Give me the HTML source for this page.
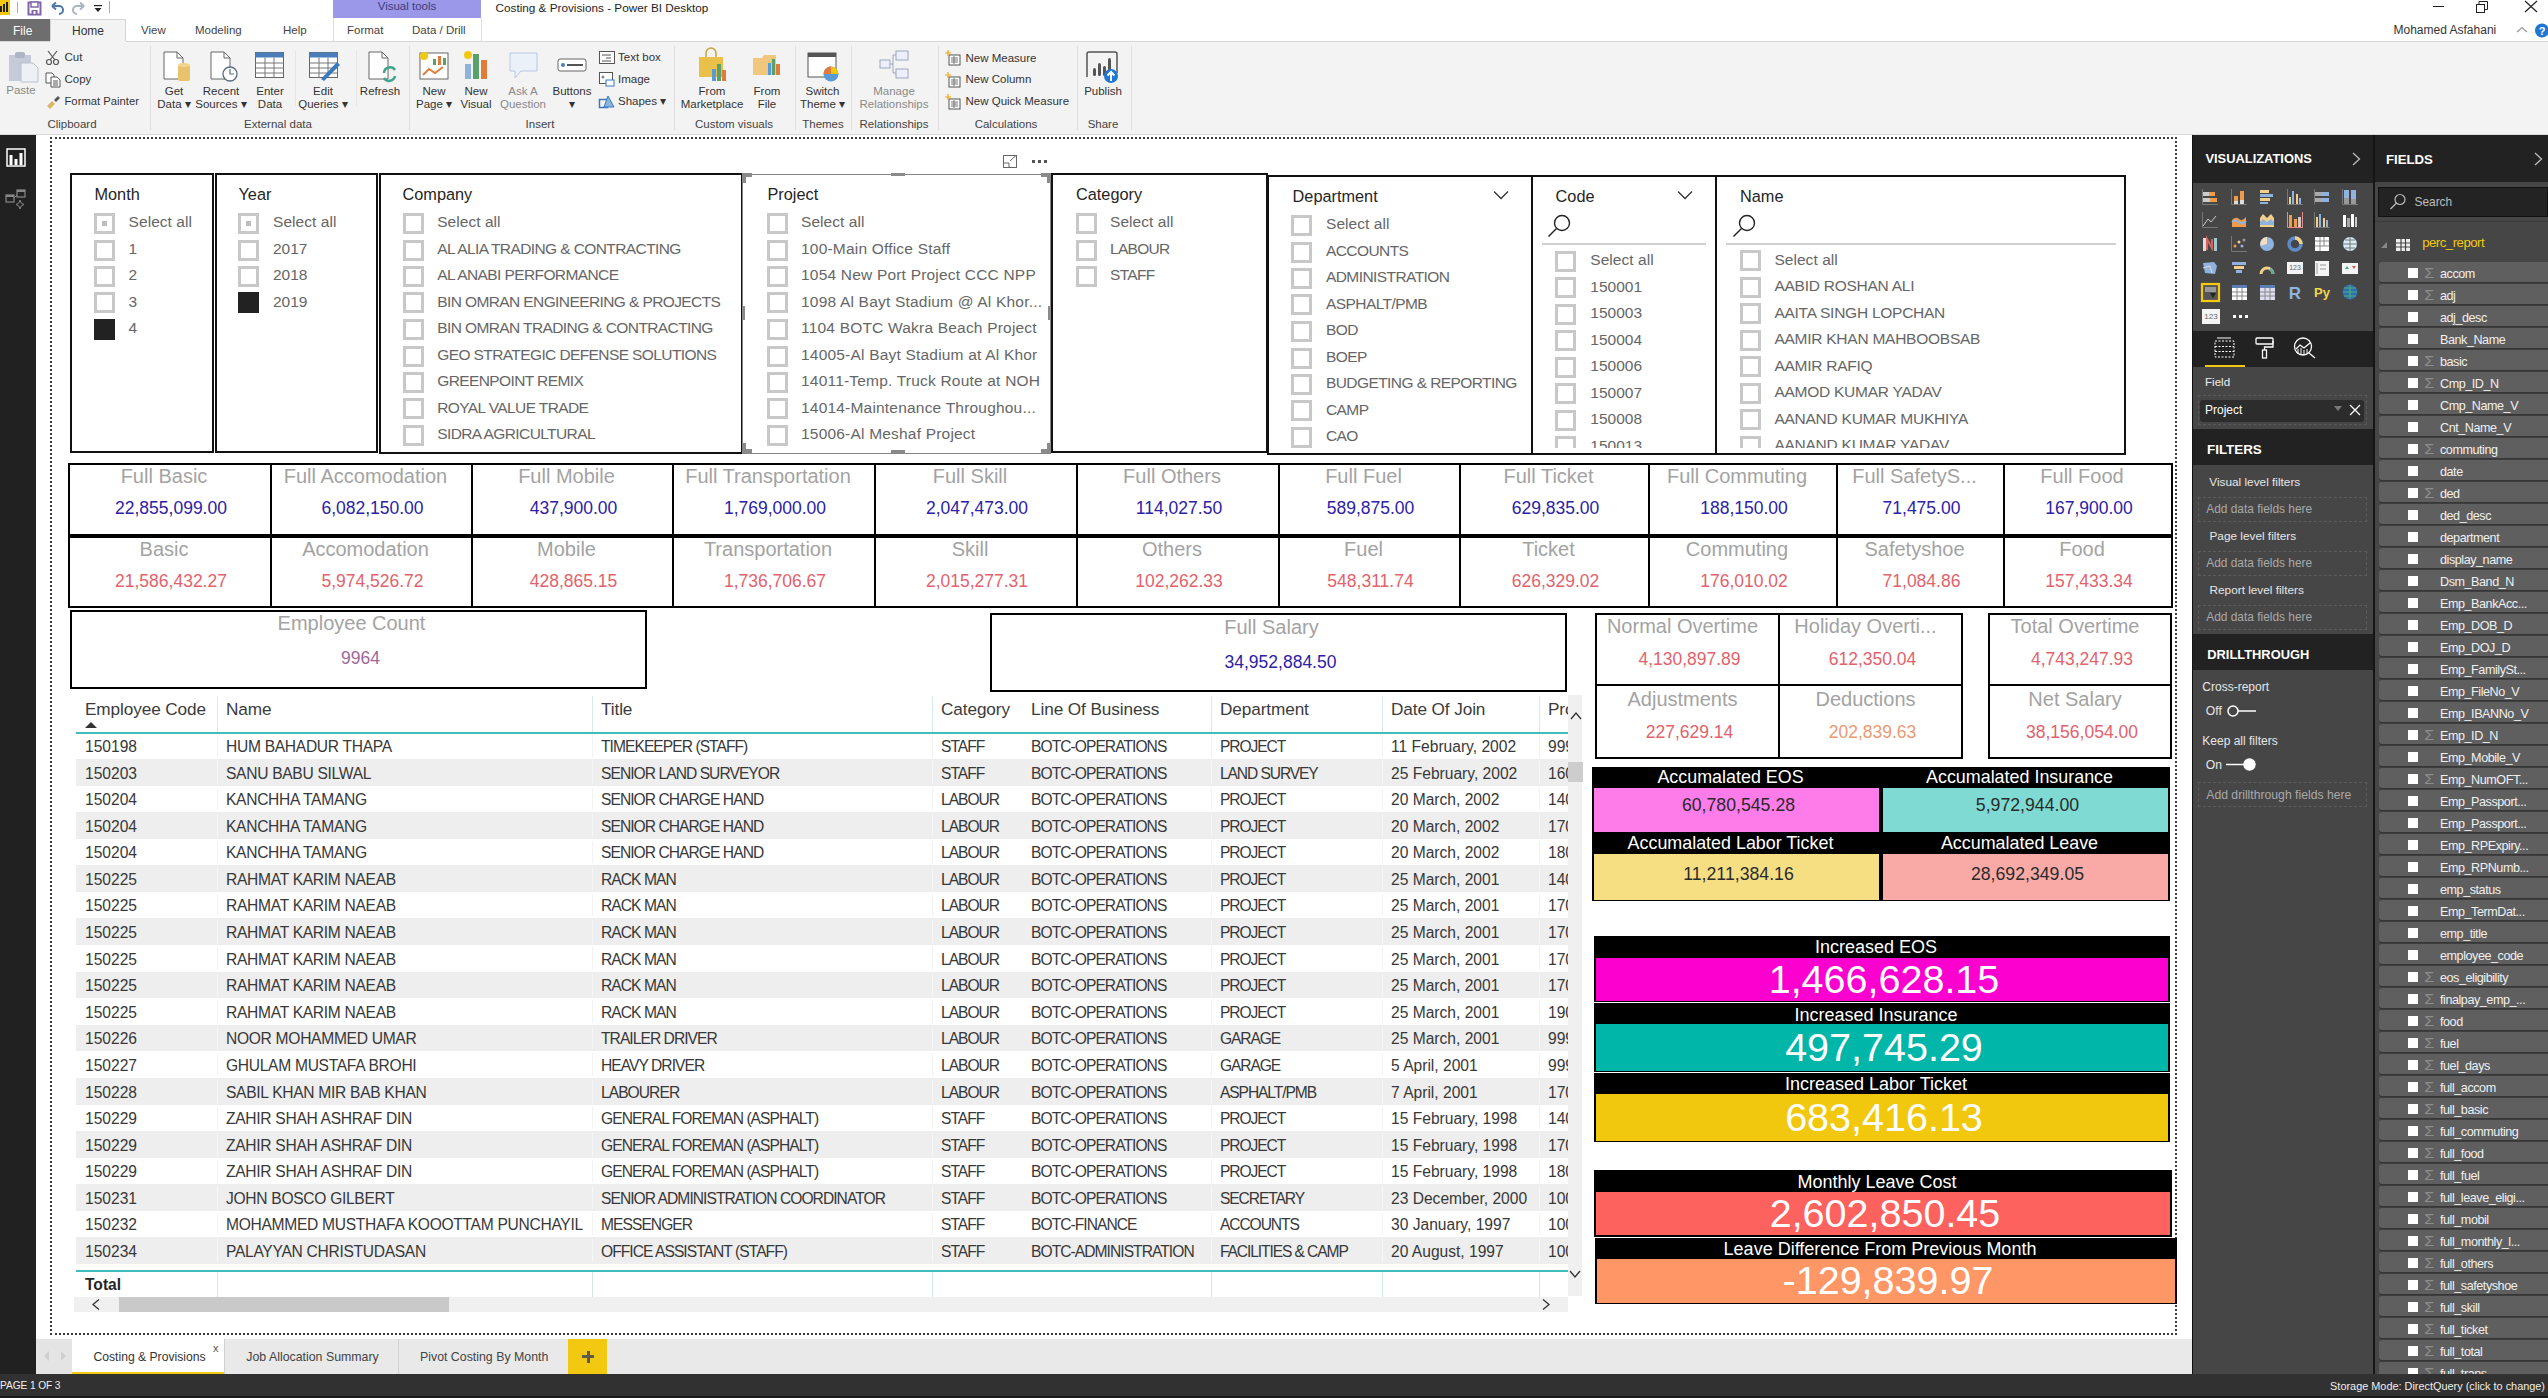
<!DOCTYPE html><html><head><meta charset="utf-8"><style>
html,body{margin:0;padding:0;width:2548px;height:1398px;overflow:hidden;background:#fff}
body{position:relative;font-family:"Liberation Sans",sans-serif}
div{position:absolute;white-space:nowrap;line-height:1}
svg{overflow:visible}
</style></head><body>
<div style="left:0px;top:0px;width:2548px;height:19px;background:#fff"></div>
<div style="left:0px;top:19px;width:2548px;height:23px;background:#fff"></div>
<div style="left:0px;top:42px;width:2548px;height:93px;background:#f3f3f3"></div>
<div style="left:0px;top:134px;width:2548px;height:1px;background:#d9d9d9"></div>
<div style="left:36px;top:135px;width:2156px;height:1204px;background:#fff"></div>
<div style="left:0px;top:135px;width:36px;height:1239px;background:#212121"></div>
<div style="left:36px;top:1339px;width:2156px;height:35px;background:#e9e9e9"></div>
<div style="left:0px;top:1374px;width:2548px;height:24px;background:#313131"></div>
<div style="left:0px;top:1396px;width:2548px;height:2px;background:#1a1a1a"></div>
<div style="left:0px;top:0px;width:10px;height:15px;background:#f2c811"></div>
<div style="left:0px;top:6px;width:2px;height:6px;background:#222"></div>
<div style="left:3px;top:4px;width:2px;height:8px;background:#222"></div>
<div style="left:6px;top:2px;width:2px;height:10px;background:#222"></div>
<div style="left:17px;top:2px;width:1px;height:11px;background:#aaa"></div>
<svg style="position:absolute;left:27px;top:1px;" width="16" height="14" viewBox="0 0 16 14"><rect x="1.5" y="1.5" width="12" height="12" fill="none" stroke="#8066a8" stroke-width="2"/><rect x="4" y="1" width="7" height="5" fill="#fff" stroke="#8066a8" stroke-width="1.5"/><rect x="4.5" y="9" width="6" height="4" fill="#8066a8"/><rect x="6.5" y="10" width="2" height="3" fill="#fff"/></svg>
<svg style="position:absolute;left:49px;top:1px;" width="16" height="14" viewBox="0 0 16 14"><path d="M3 5 L7 1.5 M3 5 L7 8.5 M3 5 H10 A4 4 0 0 1 10 13" fill="none" stroke="#4f77a8" stroke-width="2"/></svg>
<svg style="position:absolute;left:71px;top:1px;" width="16" height="14" viewBox="0 0 16 14"><path d="M13 5 L9 1.5 M13 5 L9 8.5 M13 5 H6 A4 4 0 0 0 6 13" fill="none" stroke="#a9b4c2" stroke-width="2"/></svg>
<svg style="position:absolute;left:93px;top:4px;" width="10" height="9" viewBox="0 0 10 9"><rect x="1" y="1" width="8" height="1.2" fill="#222"/><path d="M1.5 4 H8.5 L5 8 Z" fill="#222"/></svg>
<div style="left:109px;top:1px;width:1px;height:12px;background:#aaa"></div>
<div style="left:333px;top:0px;width:148px;height:18px;background:#9b98ea"></div>
<div style="left:-193px;width:1200px;text-align:center;top:1.27px;font-size:11.5px;color:#3c3c7c;">Visual tools</div>
<div style="left:495.5px;top:1.85px;font-size:11.75px;color:#1e1e1e;">Costing &amp; Provisions - Power BI Desktop</div>
<div style="left:2433px;top:6px;width:11px;height:1px;background:#222"></div>
<svg style="position:absolute;left:2476px;top:1px;" width="12" height="12" viewBox="0 0 12 12"><rect x="0.5" y="3.5" width="8" height="8" fill="none" stroke="#222"/><path d="M3 3.5 V0.5 H11.5 V8.5 H8.5" fill="none" stroke="#222"/></svg>
<svg style="position:absolute;left:2524px;top:0px;" width="14" height="13" viewBox="0 0 14 13"><path d="M1 1 L13 12 M13 1 L1 12" stroke="#222" stroke-width="1.2"/></svg>
<div style="left:0px;top:19px;width:50px;height:23px;background:#6e6e6e"></div>
<div style="left:13px;top:24.84px;font-size:12px;color:#fff;">File</div>
<div style="left:50px;top:19px;width:76px;height:23px;background:#f3f3f3;border:1px solid #d4d4d4;border-bottom:none;box-sizing:border-box"></div>
<div style="left:-512px;width:1200px;text-align:center;top:24.84px;font-size:12px;color:#333;">Home</div>
<div style="left:141px;top:25.27px;font-size:11.5px;color:#444;">View</div>
<div style="left:195px;top:25.27px;font-size:11.5px;color:#444;">Modeling</div>
<div style="left:283px;top:25.27px;font-size:11.5px;color:#444;">Help</div>
<div style="left:333px;top:18px;width:1px;height:24px;background:#e0e0e0"></div>
<div style="left:481px;top:18px;width:1px;height:24px;background:#e0e0e0"></div>
<div style="left:347px;top:25.27px;font-size:11.5px;color:#444;">Format</div>
<div style="left:412px;top:25.27px;font-size:11.5px;color:#444;">Data / Drill</div>
<div style="left:0px;top:41px;width:2548px;height:1px;background:#d8d8d8"></div>
<div style="left:50px;top:41px;width:76px;height:1px;background:#f3f3f3"></div>
<div style="left:2393.5px;top:24.34px;font-size:12px;color:#333;">Mohamed Asfahani</div>
<svg style="position:absolute;left:2516px;top:26px;" width="12" height="8" viewBox="0 0 12 8"><path d="M1 6 L6 1.5 L11 6" fill="none" stroke="#999" stroke-width="1.2"/></svg>
<svg style="position:absolute;left:2534px;top:23px;" width="14" height="15" viewBox="0 0 14 15"><circle cx="8" cy="7.5" r="7" fill="#1e78d2"/><text x="8" y="12" font-size="11" font-weight="bold" fill="#fff" text-anchor="middle" font-family="Liberation Sans">?</text></svg>
<div style="left:150px;top:46px;width:1px;height:84px;background:#dedede"></div>
<div style="left:409px;top:46px;width:1px;height:84px;background:#dedede"></div>
<div style="left:674px;top:46px;width:1px;height:84px;background:#dedede"></div>
<div style="left:795px;top:46px;width:1px;height:84px;background:#dedede"></div>
<div style="left:851px;top:46px;width:1px;height:84px;background:#dedede"></div>
<div style="left:938px;top:46px;width:1px;height:84px;background:#dedede"></div>
<div style="left:1077px;top:46px;width:1px;height:84px;background:#dedede"></div>
<div style="left:1131px;top:46px;width:1px;height:84px;background:#dedede"></div>
<div style="left:295px;top:50px;width:1px;height:56px;background:#e6e6e6"></div>
<div style="left:356px;top:50px;width:1px;height:56px;background:#e6e6e6"></div>
<div style="left:-528px;width:1200px;text-align:center;top:119.27px;font-size:11.5px;color:#444;">Clipboard</div>
<div style="left:-322px;width:1200px;text-align:center;top:119.27px;font-size:11.5px;color:#444;">External data</div>
<div style="left:-60px;width:1200px;text-align:center;top:119.27px;font-size:11.5px;color:#444;">Insert</div>
<div style="left:134px;width:1200px;text-align:center;top:119.27px;font-size:11.5px;color:#444;">Custom visuals</div>
<div style="left:223px;width:1200px;text-align:center;top:119.27px;font-size:11.5px;color:#444;">Themes</div>
<div style="left:294px;width:1200px;text-align:center;top:119.27px;font-size:11.5px;color:#444;">Relationships</div>
<div style="left:406px;width:1200px;text-align:center;top:119.27px;font-size:11.5px;color:#444;">Calculations</div>
<div style="left:503px;width:1200px;text-align:center;top:119.27px;font-size:11.5px;color:#444;">Share</div>
<svg style="position:absolute;left:8px;top:51px;" width="32" height="32" viewBox="0 0 32 32"><rect x="1" y="4" width="22" height="26" fill="#c5cbd8"/><rect x="7" y="1" width="10" height="6" rx="2" fill="#aeb6c6"/><path d="M13 12 H25 L30 17 V31 H13 Z" fill="#eef0f5" stroke="#b9c0cf"/></svg>
<div style="left:-579px;width:1200px;text-align:center;top:85.27px;font-size:11.5px;color:#8a8a8a;">Paste</div>
<svg style="position:absolute;left:45px;top:50px;" width="16" height="16" viewBox="0 0 16 16"><circle cx="4" cy="12" r="2.5" fill="none" stroke="#555" stroke-width="1.2"/><circle cx="11" cy="12" r="2.5" fill="none" stroke="#555" stroke-width="1.2"/><path d="M5 10 L12 1 M10 10 L3 1" stroke="#555" stroke-width="1.2"/></svg>
<div style="left:64.5px;top:52.27px;font-size:11.5px;color:#333;">Cut</div>
<svg style="position:absolute;left:45px;top:72px;" width="16" height="16" viewBox="0 0 16 16"><path d="M1 1 H7 L9 3 V11 H1 Z" fill="#fff" stroke="#555"/><path d="M6 5 H12 L15 8 V15 H6 Z" fill="#fff" stroke="#555"/><path d="M8 9 H13 M8 11 H13 M8 13 H13" stroke="#555"/></svg>
<div style="left:64.5px;top:74.27px;font-size:11.5px;color:#333;">Copy</div>
<svg style="position:absolute;left:45px;top:94px;" width="16" height="16" viewBox="0 0 16 16"><path d="M2 12 L7 7 L10 10 L5 15 Z" fill="#d9b76a"/><path d="M9 6 L13 2 L15 4 L11 8 Z" fill="#555"/></svg>
<div style="left:64.5px;top:96.48px;font-size:11.25px;color:#333;">Format Painter</div>
<svg style="position:absolute;left:163px;top:51px;" width="30" height="32" viewBox="0 0 30 32"><path d="M1 1 H14 L20 7 V28 H1 Z" fill="#fff" stroke="#666"/><path d="M14 1 V7 H20" fill="none" stroke="#666"/><rect x="15" y="14" width="12" height="16" rx="2" fill="#e8c26d"/><ellipse cx="21" cy="14" rx="6" ry="2" fill="#f2d48a"/></svg>
<div style="left:-426px;width:1200px;text-align:center;top:86.27px;font-size:11.5px;color:#333;">Get</div>
<div style="left:-426px;width:1200px;text-align:center;top:99.27px;font-size:11.5px;color:#333;">Data &#9662;</div>
<svg style="position:absolute;left:210px;top:51px;" width="30" height="32" viewBox="0 0 30 32"><path d="M1 1 H14 L20 7 V28 H1 Z" fill="#fff" stroke="#666"/><path d="M14 1 V7 H20" fill="none" stroke="#666"/><circle cx="20" cy="23" r="7" fill="#fff" stroke="#5a6b80" stroke-width="1.3"/><path d="M20 18 V23 H24" fill="none" stroke="#5a6b80" stroke-width="1.2"/></svg>
<div style="left:-379px;width:1200px;text-align:center;top:86.27px;font-size:11.5px;color:#333;">Recent</div>
<div style="left:-379px;width:1200px;text-align:center;top:99.27px;font-size:11.5px;color:#333;">Sources &#9662;</div>
<svg style="position:absolute;left:255px;top:52px;" width="30" height="27" viewBox="0 0 30 27"><rect x="0.5" y="0.5" width="28" height="25" fill="#fff" stroke="#666"/><rect x="0.5" y="0.5" width="28" height="5" fill="#4a7ebb"/><path d="M0.5 11 H28.5 M0.5 16 H28.5 M0.5 21 H28.5 M10 5.5 V25.5 M19 5.5 V25.5" stroke="#777" stroke-width="1"/></svg>
<div style="left:-330px;width:1200px;text-align:center;top:86.27px;font-size:11.5px;color:#333;">Enter</div>
<div style="left:-330px;width:1200px;text-align:center;top:99.27px;font-size:11.5px;color:#333;">Data</div>
<svg style="position:absolute;left:309px;top:52px;" width="32" height="30" viewBox="0 0 32 30"><rect x="0.5" y="0.5" width="28" height="25" fill="#fff" stroke="#666"/><rect x="0.5" y="0.5" width="28" height="5" fill="#4a7ebb"/><path d="M0.5 11 H28.5 M0.5 16 H28.5 M0.5 21 H28.5 M10 5.5 V25.5 M19 5.5 V25.5" stroke="#777"/><path d="M12 27 L28 10 L31 13 L15 29 Z" fill="#3b78c0"/></svg>
<div style="left:-277px;width:1200px;text-align:center;top:86.27px;font-size:11.5px;color:#333;">Edit</div>
<div style="left:-277px;width:1200px;text-align:center;top:99.27px;font-size:11.5px;color:#333;">Queries &#9662;</div>
<svg style="position:absolute;left:368px;top:51px;" width="30" height="32" viewBox="0 0 30 32"><path d="M1 1 H14 L20 7 V28 H1 Z" fill="#fff" stroke="#666"/><path d="M14 1 V7 H20" fill="none" stroke="#666"/><path d="M16 22 A6 6 0 0 1 27 19 M27 25 A6 6 0 0 1 16 27" fill="none" stroke="#3fa58d" stroke-width="2.5"/></svg>
<div style="left:-220px;width:1200px;text-align:center;top:86.27px;font-size:11.5px;color:#333;">Refresh</div>
<svg style="position:absolute;left:419px;top:50px;" width="32" height="31" viewBox="0 0 32 31"><rect x="1" y="3" width="28" height="26" fill="#fff" stroke="#666"/><rect x="14" y="9" width="3" height="6" fill="#5aa06a"/><rect x="19" y="6" width="3" height="9" fill="#e07b39"/><rect x="24" y="8" width="3" height="7" fill="#5aa06a"/><path d="M4 25 L10 19 L16 23 L24 17" fill="none" stroke="#e07b39" stroke-width="2"/><circle cx="5" cy="6" r="4" fill="#f2c811"/></svg>
<div style="left:-166px;width:1200px;text-align:center;top:86.27px;font-size:11.5px;color:#333;">New</div>
<div style="left:-166px;width:1200px;text-align:center;top:99.27px;font-size:11.5px;color:#333;">Page &#9662;</div>
<svg style="position:absolute;left:463px;top:50px;" width="28" height="31" viewBox="0 0 28 31"><rect x="2" y="14" width="6" height="15" fill="#8fb4dc"/><rect x="10" y="4" width="6" height="25" fill="#5aa06a"/><rect x="18" y="10" width="6" height="19" fill="#e07b39"/><circle cx="5" cy="5" r="4" fill="#f2c811"/></svg>
<div style="left:-124px;width:1200px;text-align:center;top:86.27px;font-size:11.5px;color:#333;">New</div>
<div style="left:-124px;width:1200px;text-align:center;top:99.27px;font-size:11.5px;color:#333;">Visual</div>
<svg style="position:absolute;left:509px;top:52px;" width="30" height="28" viewBox="0 0 30 28"><path d="M1 1 H28 V19 H12 L6 26 V19 H1 Z" fill="#eaf1f9" stroke="#b7c9de"/></svg>
<div style="left:-77px;width:1200px;text-align:center;top:86.27px;font-size:11.5px;color:#8a8a8a;">Ask A</div>
<div style="left:-77px;width:1200px;text-align:center;top:99.27px;font-size:11.5px;color:#8a8a8a;">Question</div>
<svg style="position:absolute;left:557px;top:58px;" width="32" height="16" viewBox="0 0 32 16"><rect x="1" y="1" width="28" height="12" rx="2" fill="#fff" stroke="#666"/><circle cx="6" cy="7" r="2" fill="#4a7ebb"/><rect x="10" y="6" width="16" height="2" fill="#555"/></svg>
<div style="left:-28px;width:1200px;text-align:center;top:86.27px;font-size:11.5px;color:#333;">Buttons</div>
<div style="left:-28px;width:1200px;text-align:center;top:99.27px;font-size:11.5px;color:#333;">&#9662;</div>
<svg style="position:absolute;left:599px;top:51px;" width="16" height="14" viewBox="0 0 16 14"><rect x="0.5" y="0.5" width="15" height="12" fill="#fff" stroke="#555"/><path d="M3 4 H12 M7 7 H12 M3 10 H12" stroke="#555"/></svg>
<div style="left:618px;top:52.27px;font-size:11.5px;color:#333;">Text box</div>
<svg style="position:absolute;left:599px;top:72px;" width="16" height="16" viewBox="0 0 16 16"><rect x="0.5" y="0.5" width="13" height="11" fill="#fff" stroke="#555"/><circle cx="4" cy="5" r="1.5" fill="#888"/><rect x="7" y="8" width="8" height="6" fill="#fff" stroke="#3b78c0"/></svg>
<div style="left:618px;top:74.27px;font-size:11.5px;color:#333;">Image</div>
<svg style="position:absolute;left:599px;top:95px;" width="16" height="14" viewBox="0 0 16 14"><rect x="0.5" y="4.5" width="8" height="8" fill="none" stroke="#3b78c0" stroke-width="1.5"/><path d="M9 1 L15 12 H5 Z" fill="#8fb4dc" stroke="#3b78c0"/></svg>
<div style="left:618px;top:96.27px;font-size:11.5px;color:#333;">Shapes &#9662;</div>
<svg style="position:absolute;left:697px;top:49px;" width="32" height="34" viewBox="0 0 32 34"><path d="M2 8 H26 V28 H2 Z" fill="#e8c04a"/><path d="M9 8 V4 A5 5 0 0 1 19 4 V8" fill="none" stroke="#c9a232" stroke-width="1.5"/><rect x="15" y="20" width="4" height="12" fill="#5a9bd5"/><rect x="20" y="15" width="4" height="17" fill="#5aa06a"/><rect x="25" y="21" width="4" height="11" fill="#e07b39"/></svg>
<div style="left:112px;width:1200px;text-align:center;top:86.27px;font-size:11.5px;color:#333;">From</div>
<div style="left:112px;width:1200px;text-align:center;top:98.77px;font-size:11.5px;color:#333;">Marketplace</div>
<svg style="position:absolute;left:752px;top:53px;" width="32" height="26" viewBox="0 0 32 26"><path d="M1 5 H10 L12 2 H24 V22 H1 Z" fill="#f0c77d"/><rect x="16" y="10" width="3" height="12" fill="#5a9bd5"/><rect x="20" y="6" width="3" height="16" fill="#5aa06a"/><rect x="24" y="11" width="4" height="11" fill="#e07b39"/></svg>
<div style="left:167px;width:1200px;text-align:center;top:86.27px;font-size:11.5px;color:#333;">From</div>
<div style="left:167px;width:1200px;text-align:center;top:98.77px;font-size:11.5px;color:#333;">File</div>
<svg style="position:absolute;left:807px;top:52px;" width="32" height="30" viewBox="0 0 32 30"><rect x="1" y="1" width="28" height="24" fill="#fff" stroke="#555"/><rect x="1" y="1" width="28" height="4" fill="#555"/><circle cx="24" cy="22" r="7.5" fill="#5a9bd5"/><path d="M24 22 L24 14.5 A7.5 7.5 0 0 0 16.5 22 Z" fill="#e07b39"/><path d="M24 22 L31.5 22 A7.5 7.5 0 0 0 24 14.5 Z" fill="#f2c811"/></svg>
<div style="left:222.5px;width:1200px;text-align:center;top:86.27px;font-size:11.5px;color:#333;">Switch</div>
<div style="left:222.5px;width:1200px;text-align:center;top:98.77px;font-size:11.5px;color:#333;">Theme &#9662;</div>
<svg style="position:absolute;left:879px;top:50px;" width="32" height="30" viewBox="0 0 32 30"><rect x="1" y="10" width="10" height="8" fill="#eef" stroke="#9aa8bb"/><rect x="17" y="1" width="12" height="9" fill="#eef" stroke="#9aa8bb"/><rect x="17" y="19" width="12" height="9" fill="#eef" stroke="#9aa8bb"/><path d="M11 14 H14 V5 H17 M14 14 V23 H17" fill="none" stroke="#9aa8bb"/></svg>
<div style="left:294px;width:1200px;text-align:center;top:86.27px;font-size:11.5px;color:#8a8a8a;">Manage</div>
<div style="left:294px;width:1200px;text-align:center;top:98.77px;font-size:11.5px;color:#8a8a8a;">Relationships</div>
<svg style="position:absolute;left:945px;top:50px;" width="18" height="16" viewBox="0 0 18 16"><rect x="4" y="5" width="11" height="10" fill="#fff" stroke="#555"/><path d="M6 8 H13 M6 10 H13 M6 12 H13 M9 6 V14" stroke="#777"/><path d="M3 0 V6 M0 3 H6" stroke="#f2a811" stroke-width="1.2"/></svg>
<svg style="position:absolute;left:945px;top:72px;" width="18" height="16" viewBox="0 0 18 16"><rect x="4" y="5" width="11" height="10" fill="#fff" stroke="#555"/><path d="M6 8 H13 M6 10 H13 M6 12 H13 M9 6 V14" stroke="#777"/><path d="M3 0 V6 M0 3 H6" stroke="#f2a811" stroke-width="1.2"/></svg>
<svg style="position:absolute;left:945px;top:94px;" width="18" height="16" viewBox="0 0 18 16"><rect x="4" y="5" width="11" height="10" fill="#fff" stroke="#555"/><path d="M6 8 H13 M6 10 H13 M6 12 H13 M9 6 V14" stroke="#777"/><path d="M3 0 V6 M0 3 H6" stroke="#f2a811" stroke-width="1.2"/></svg>
<div style="left:965.5px;top:52.77px;font-size:11.5px;color:#333;">New Measure</div>
<div style="left:965.5px;top:74.47px;font-size:11.5px;color:#333;">New Column</div>
<div style="left:965.5px;top:96.27px;font-size:11.5px;color:#333;">New Quick Measure</div>
<svg style="position:absolute;left:1086px;top:51px;" width="36" height="33" viewBox="0 0 36 33"><path d="M1 26 V3 A2 2 0 0 1 3 1 H29 A2 2 0 0 1 31 3 V22" fill="none" stroke="#555" stroke-width="1.5"/><rect x="7" y="17" width="3" height="8" rx="1.5" fill="#555"/><rect x="12" y="12" width="3" height="13" rx="1.5" fill="#555"/><rect x="17" y="15" width="3" height="10" rx="1.5" fill="#555"/><rect x="22" y="7" width="3" height="13" rx="1.5" fill="#555"/><circle cx="25" cy="25" r="7" fill="#1e78d2"/><path d="M25 30 V21 M21.5 24.5 L25 21 L28.5 24.5" fill="none" stroke="#fff" stroke-width="2"/></svg>
<div style="left:503px;width:1200px;text-align:center;top:86.27px;font-size:11.5px;color:#333;">Publish</div>
<svg style="position:absolute;left:6px;top:148px;" width="20" height="19" viewBox="0 0 20 19"><rect x="1" y="1" width="18" height="17" fill="none" stroke="#fff" stroke-width="1.5"/><rect x="3.5" y="7" width="3" height="10" fill="#fff"/><rect x="8.5" y="11" width="3" height="6" fill="#fff"/><rect x="13.5" y="5" width="3" height="12" fill="#fff"/></svg>
<svg style="position:absolute;left:5px;top:189px;" width="22" height="21" viewBox="0 0 22 21"><rect x="1" y="6" width="8" height="7" fill="none" stroke="#888" stroke-width="1.2"/><rect x="1" y="6" width="8" height="2" fill="#888"/><rect x="12" y="1" width="8" height="7" fill="none" stroke="#888" stroke-width="1.2"/><rect x="12" y="1" width="8" height="2" fill="#888"/><path d="M9 9 L12 6" stroke="#888"/><path d="M15 11 Q15.5 15 19 15.5 Q15.5 16 15 20 Q14.5 16 11 15.5 Q14.5 15 15 11 Z" fill="none" stroke="#888"/></svg>
<div style="left:50px;top:137px;width:2127px;height:1198px;border:2px dotted #3a3a3a;box-sizing:border-box"></div>
<div style="left:70px;top:173px;width:144px;height:280px;border:2px solid #111;box-sizing:border-box;background:#fff"></div>
<div style="left:215px;top:173px;width:163px;height:280px;border:2px solid #111;box-sizing:border-box;background:#fff"></div>
<div style="left:379px;top:173px;width:364px;height:281px;border:2px solid #111;box-sizing:border-box;background:#fff"></div>
<div style="left:1051px;top:173px;width:217px;height:280px;border:2px solid #111;box-sizing:border-box;background:#fff"></div>
<div style="left:1267px;top:175px;width:266px;height:280px;border:2px solid #111;box-sizing:border-box;background:#fff"></div>
<div style="left:1531px;top:175px;width:186px;height:280px;border:2px solid #111;box-sizing:border-box;background:#fff"></div>
<div style="left:1715px;top:175px;width:411px;height:280px;border:2px solid #111;box-sizing:border-box;background:#fff"></div>
<div style="left:742px;top:173.5px;width:309px;height:280px;border:1.5px solid #858585;box-sizing:border-box;background:#fff"></div>
<div style="left:742px;top:173px;width:10px;height:4px;background:#8a8a8a"></div>
<div style="left:742px;top:173px;width:4px;height:10px;background:#8a8a8a"></div>
<div style="left:1041px;top:173px;width:10px;height:4px;background:#8a8a8a"></div>
<div style="left:1047px;top:173px;width:4px;height:10px;background:#8a8a8a"></div>
<div style="left:742px;top:449px;width:10px;height:4px;background:#8a8a8a"></div>
<div style="left:742px;top:443px;width:4px;height:10px;background:#8a8a8a"></div>
<div style="left:1041px;top:449px;width:10px;height:4px;background:#8a8a8a"></div>
<div style="left:1047px;top:443px;width:4px;height:10px;background:#8a8a8a"></div>
<div style="left:891px;top:173px;width:14px;height:3px;background:#8a8a8a"></div>
<div style="left:891px;top:450px;width:14px;height:3px;background:#8a8a8a"></div>
<div style="left:742px;top:306px;width:3px;height:14px;background:#8a8a8a"></div>
<div style="left:1048px;top:306px;width:3px;height:14px;background:#8a8a8a"></div>
<svg style="position:absolute;left:1003px;top:155px;" width="16" height="14" viewBox="0 0 16 14"><rect x="0.5" y="0.5" width="13" height="12" fill="none" stroke="#666"/><path d="M0.5 8 H6 V12.5 M7 6 L13 0.5 M9 0.5 H13.5 V4.5" fill="none" stroke="#666"/></svg>
<div style="left:1032px;top:160px;width:3px;height:3px;background:#555"></div>
<div style="left:1038px;top:160px;width:3px;height:3px;background:#555"></div>
<div style="left:1044px;top:160px;width:3px;height:3px;background:#555"></div>
<div style="left:94.5px;top:186.20px;font-size:16.3px;color:#252525;">Month</div>
<div style="left:93.5px;top:213px;width:21px;height:21px;border:3px solid #c8c8c8;box-sizing:border-box;background:#fff"></div>
<div style="left:101.5px;top:221px;width:5px;height:5px;background:#bdbdbd"></div>
<div style="left:128.6px;top:214.48px;font-size:15.5px;color:#666;letter-spacing:0.05px">Select all</div>
<div style="left:93.5px;top:240px;width:21px;height:21px;border:3px solid #c8c8c8;box-sizing:border-box;background:#fff"></div>
<div style="left:128.6px;top:240.98px;font-size:15.5px;color:#666;letter-spacing:0px">1</div>
<div style="left:93.5px;top:266px;width:21px;height:21px;border:3px solid #c8c8c8;box-sizing:border-box;background:#fff"></div>
<div style="left:128.6px;top:267.48px;font-size:15.5px;color:#666;letter-spacing:0px">2</div>
<div style="left:93.5px;top:292px;width:21px;height:21px;border:3px solid #c8c8c8;box-sizing:border-box;background:#fff"></div>
<div style="left:128.6px;top:293.98px;font-size:15.5px;color:#666;letter-spacing:0px">3</div>
<div style="left:93.5px;top:319px;width:21px;height:21px;background:#222"></div>
<div style="left:128.6px;top:320.48px;font-size:15.5px;color:#666;letter-spacing:0px">4</div>
<div style="left:238.5px;top:186.20px;font-size:16.3px;color:#252525;">Year</div>
<div style="left:238px;top:213px;width:21px;height:21px;border:3px solid #c8c8c8;box-sizing:border-box;background:#fff"></div>
<div style="left:246px;top:221px;width:5px;height:5px;background:#bdbdbd"></div>
<div style="left:273px;top:214.48px;font-size:15.5px;color:#666;letter-spacing:0.05px">Select all</div>
<div style="left:238px;top:240px;width:21px;height:21px;border:3px solid #c8c8c8;box-sizing:border-box;background:#fff"></div>
<div style="left:273px;top:240.98px;font-size:15.5px;color:#666;letter-spacing:0px">2017</div>
<div style="left:238px;top:266px;width:21px;height:21px;border:3px solid #c8c8c8;box-sizing:border-box;background:#fff"></div>
<div style="left:273px;top:267.48px;font-size:15.5px;color:#666;letter-spacing:0px">2018</div>
<div style="left:238px;top:292px;width:21px;height:21px;background:#222"></div>
<div style="left:273px;top:293.98px;font-size:15.5px;color:#666;letter-spacing:0px">2019</div>
<div style="left:402.5px;top:186.20px;font-size:16.3px;color:#252525;">Company</div>
<div style="left:402.5px;top:213px;width:21px;height:21px;border:3px solid #c8c8c8;box-sizing:border-box;background:#fff"></div>
<div style="left:437.2px;top:214.48px;font-size:15.5px;color:#666;letter-spacing:0.05px">Select all</div>
<div style="left:402.5px;top:240px;width:21px;height:21px;border:3px solid #c8c8c8;box-sizing:border-box;background:#fff"></div>
<div style="left:437.2px;top:240.98px;font-size:15.5px;color:#666;letter-spacing:-0.6px">AL ALIA TRADING &amp; CONTRACTING</div>
<div style="left:402.5px;top:266px;width:21px;height:21px;border:3px solid #c8c8c8;box-sizing:border-box;background:#fff"></div>
<div style="left:437.2px;top:267.48px;font-size:15.5px;color:#666;letter-spacing:-0.6px">AL ANABI PERFORMANCE</div>
<div style="left:402.5px;top:292px;width:21px;height:21px;border:3px solid #c8c8c8;box-sizing:border-box;background:#fff"></div>
<div style="left:437.2px;top:293.98px;font-size:15.5px;color:#666;letter-spacing:-0.6px">BIN OMRAN ENGINEERING &amp; PROJECTS</div>
<div style="left:402.5px;top:319px;width:21px;height:21px;border:3px solid #c8c8c8;box-sizing:border-box;background:#fff"></div>
<div style="left:437.2px;top:320.48px;font-size:15.5px;color:#666;letter-spacing:-0.6px">BIN OMRAN TRADING &amp; CONTRACTING</div>
<div style="left:402.5px;top:346px;width:21px;height:21px;border:3px solid #c8c8c8;box-sizing:border-box;background:#fff"></div>
<div style="left:437.2px;top:346.98px;font-size:15.5px;color:#666;letter-spacing:-0.6px">GEO STRATEGIC DEFENSE SOLUTIONS</div>
<div style="left:402.5px;top:372px;width:21px;height:21px;border:3px solid #c8c8c8;box-sizing:border-box;background:#fff"></div>
<div style="left:437.2px;top:373.48px;font-size:15.5px;color:#666;letter-spacing:-0.6px">GREENPOINT REMIX</div>
<div style="left:402.5px;top:398px;width:21px;height:21px;border:3px solid #c8c8c8;box-sizing:border-box;background:#fff"></div>
<div style="left:437.2px;top:399.98px;font-size:15.5px;color:#666;letter-spacing:-0.6px">ROYAL VALUE TRADE</div>
<div style="left:402.5px;top:425px;width:21px;height:21px;border:3px solid #c8c8c8;box-sizing:border-box;background:#fff"></div>
<div style="left:437.2px;top:426.48px;font-size:15.5px;color:#666;letter-spacing:-0.6px">SIDRA AGRICULTURAL</div>
<div style="left:767.5px;top:186.20px;font-size:16.3px;color:#252525;">Project</div>
<div style="left:766.5px;top:213px;width:21px;height:21px;border:3px solid #c8c8c8;box-sizing:border-box;background:#fff"></div>
<div style="left:801px;top:214.48px;font-size:15.5px;color:#666;letter-spacing:0.05px">Select all</div>
<div style="left:766.5px;top:240px;width:21px;height:21px;border:3px solid #c8c8c8;box-sizing:border-box;background:#fff"></div>
<div style="left:801px;top:240.98px;font-size:15.5px;color:#666;letter-spacing:0.2px">100-Main Office Staff</div>
<div style="left:766.5px;top:266px;width:21px;height:21px;border:3px solid #c8c8c8;box-sizing:border-box;background:#fff"></div>
<div style="left:801px;top:267.48px;font-size:15.5px;color:#666;letter-spacing:0.2px">1054 New Port Project CCC NPP</div>
<div style="left:766.5px;top:292px;width:21px;height:21px;border:3px solid #c8c8c8;box-sizing:border-box;background:#fff"></div>
<div style="left:801px;top:293.98px;font-size:15.5px;color:#666;letter-spacing:0.2px">1098 Al Bayt Stadium @ Al Khor...</div>
<div style="left:766.5px;top:319px;width:21px;height:21px;border:3px solid #c8c8c8;box-sizing:border-box;background:#fff"></div>
<div style="left:801px;top:320.48px;font-size:15.5px;color:#666;letter-spacing:0.2px">1104 BOTC Wakra Beach Project</div>
<div style="left:766.5px;top:346px;width:21px;height:21px;border:3px solid #c8c8c8;box-sizing:border-box;background:#fff"></div>
<div style="left:801px;top:346.98px;font-size:15.5px;color:#666;letter-spacing:0.2px">14005-Al Bayt Stadium at Al Khor</div>
<div style="left:766.5px;top:372px;width:21px;height:21px;border:3px solid #c8c8c8;box-sizing:border-box;background:#fff"></div>
<div style="left:801px;top:373.48px;font-size:15.5px;color:#666;letter-spacing:0.2px">14011-Temp. Truck Route at NOH</div>
<div style="left:766.5px;top:398px;width:21px;height:21px;border:3px solid #c8c8c8;box-sizing:border-box;background:#fff"></div>
<div style="left:801px;top:399.98px;font-size:15.5px;color:#666;letter-spacing:0.2px">14014-Maintenance Throughou...</div>
<div style="left:766.5px;top:425px;width:21px;height:21px;border:3px solid #c8c8c8;box-sizing:border-box;background:#fff"></div>
<div style="left:801px;top:426.48px;font-size:15.5px;color:#666;letter-spacing:0.2px">15006-Al Meshaf Project</div>
<div style="left:1076px;top:186.20px;font-size:16.3px;color:#252525;">Category</div>
<div style="left:1075.5px;top:213px;width:21px;height:21px;border:3px solid #c8c8c8;box-sizing:border-box;background:#fff"></div>
<div style="left:1110px;top:214.48px;font-size:15.5px;color:#666;letter-spacing:0.05px">Select all</div>
<div style="left:1075.5px;top:240px;width:21px;height:21px;border:3px solid #c8c8c8;box-sizing:border-box;background:#fff"></div>
<div style="left:1110px;top:240.98px;font-size:15.5px;color:#666;letter-spacing:-0.7px">LABOUR</div>
<div style="left:1075.5px;top:266px;width:21px;height:21px;border:3px solid #c8c8c8;box-sizing:border-box;background:#fff"></div>
<div style="left:1110px;top:267.48px;font-size:15.5px;color:#666;letter-spacing:-0.7px">STAFF</div>
<div style="left:1292.6px;top:188.20px;font-size:16.3px;color:#252525;">Department</div>
<svg style="position:absolute;left:1493px;top:190px;" width="17" height="11" viewBox="0 0 17 11"><path d="M1 1.5 L8 8.5 L15 1.5" fill="none" stroke="#333" stroke-width="1.3"/></svg>
<div style="left:1291.2px;top:215px;width:21px;height:21px;border:3px solid #c8c8c8;box-sizing:border-box;background:#fff"></div>
<div style="left:1326px;top:216.48px;font-size:15.5px;color:#666;letter-spacing:0.05px">Select all</div>
<div style="left:1291.2px;top:242px;width:21px;height:21px;border:3px solid #c8c8c8;box-sizing:border-box;background:#fff"></div>
<div style="left:1326px;top:242.98px;font-size:15.5px;color:#666;letter-spacing:-0.58px">ACCOUNTS</div>
<div style="left:1291.2px;top:268px;width:21px;height:21px;border:3px solid #c8c8c8;box-sizing:border-box;background:#fff"></div>
<div style="left:1326px;top:269.48px;font-size:15.5px;color:#666;letter-spacing:-0.58px">ADMINISTRATION</div>
<div style="left:1291.2px;top:294px;width:21px;height:21px;border:3px solid #c8c8c8;box-sizing:border-box;background:#fff"></div>
<div style="left:1326px;top:295.98px;font-size:15.5px;color:#666;letter-spacing:-0.58px">ASPHALT/PMB</div>
<div style="left:1291.2px;top:321px;width:21px;height:21px;border:3px solid #c8c8c8;box-sizing:border-box;background:#fff"></div>
<div style="left:1326px;top:322.48px;font-size:15.5px;color:#666;letter-spacing:-0.58px">BOD</div>
<div style="left:1291.2px;top:348px;width:21px;height:21px;border:3px solid #c8c8c8;box-sizing:border-box;background:#fff"></div>
<div style="left:1326px;top:348.98px;font-size:15.5px;color:#666;letter-spacing:-0.58px">BOEP</div>
<div style="left:1291.2px;top:374px;width:21px;height:21px;border:3px solid #c8c8c8;box-sizing:border-box;background:#fff"></div>
<div style="left:1326px;top:375.48px;font-size:15.5px;color:#666;letter-spacing:-0.58px">BUDGETING &amp; REPORTING</div>
<div style="left:1291.2px;top:400px;width:21px;height:21px;border:3px solid #c8c8c8;box-sizing:border-box;background:#fff"></div>
<div style="left:1326px;top:401.98px;font-size:15.5px;color:#666;letter-spacing:-0.58px">CAMP</div>
<div style="left:1291.2px;top:427px;width:21px;height:21px;border:3px solid #c8c8c8;box-sizing:border-box;background:#fff"></div>
<div style="left:1326px;top:428.48px;font-size:15.5px;color:#666;letter-spacing:-0.58px">CAO</div>
<div style="left:1555.6px;top:188.20px;font-size:16.3px;color:#252525;">Code</div>
<svg style="position:absolute;left:1677px;top:190px;" width="17" height="11" viewBox="0 0 17 11"><path d="M1 1.5 L8 8.5 L15 1.5" fill="none" stroke="#333" stroke-width="1.3"/></svg>
<svg style="position:absolute;left:1547px;top:213px;" width="26" height="26" viewBox="0 0 26 26"><circle cx="15" cy="10" r="7.5" fill="none" stroke="#222" stroke-width="1.4"/><path d="M9.5 15.5 L1.5 23.5" stroke="#222" stroke-width="1.4"/></svg>
<div style="left:1542px;top:243px;width:164px;height:2px;background:#d0d0d0"></div>
<div style="left:1533px;top:247px;width:182px;height:201px;overflow:hidden">
<div style="left:22px;top:4px;width:21px;height:21px;border:3px solid #c8c8c8;box-sizing:border-box"></div>
<div style="left:57.299999999999955px;top:5.18px;font-size:15.5px;color:#666;letter-spacing:0.05px">Select all</div>
<div style="left:22px;top:30px;width:21px;height:21px;border:3px solid #c8c8c8;box-sizing:border-box"></div>
<div style="left:57.299999999999955px;top:31.68px;font-size:15.5px;color:#666;letter-spacing:0px">150001</div>
<div style="left:22px;top:57px;width:21px;height:21px;border:3px solid #c8c8c8;box-sizing:border-box"></div>
<div style="left:57.299999999999955px;top:58.18px;font-size:15.5px;color:#666;letter-spacing:0px">150003</div>
<div style="left:22px;top:83px;width:21px;height:21px;border:3px solid #c8c8c8;box-sizing:border-box"></div>
<div style="left:57.299999999999955px;top:84.68px;font-size:15.5px;color:#666;letter-spacing:0px">150004</div>
<div style="left:22px;top:110px;width:21px;height:21px;border:3px solid #c8c8c8;box-sizing:border-box"></div>
<div style="left:57.299999999999955px;top:111.18px;font-size:15.5px;color:#666;letter-spacing:0px">150006</div>
<div style="left:22px;top:136px;width:21px;height:21px;border:3px solid #c8c8c8;box-sizing:border-box"></div>
<div style="left:57.299999999999955px;top:137.68px;font-size:15.5px;color:#666;letter-spacing:0px">150007</div>
<div style="left:22px;top:163px;width:21px;height:21px;border:3px solid #c8c8c8;box-sizing:border-box"></div>
<div style="left:57.299999999999955px;top:164.18px;font-size:15.5px;color:#666;letter-spacing:0px">150008</div>
<div style="left:22px;top:189px;width:21px;height:21px;border:3px solid #c8c8c8;box-sizing:border-box"></div>
<div style="left:57.299999999999955px;top:190.68px;font-size:15.5px;color:#666;letter-spacing:0px">150013</div>
</div>
<div style="left:1740px;top:188.20px;font-size:16.3px;color:#252525;">Name</div>
<svg style="position:absolute;left:1732px;top:213px;" width="26" height="26" viewBox="0 0 26 26"><circle cx="15" cy="10" r="7.5" fill="none" stroke="#222" stroke-width="1.4"/><path d="M9.5 15.5 L1.5 23.5" stroke="#222" stroke-width="1.4"/></svg>
<div style="left:1726px;top:243px;width:390px;height:2px;background:#d0d0d0"></div>
<div style="left:1717px;top:247px;width:407px;height:201px;overflow:hidden">
<div style="left:22.700000000000045px;top:3px;width:21px;height:21px;border:3px solid #c8c8c8;box-sizing:border-box"></div>
<div style="left:57.40000000000009px;top:4.88px;font-size:15.5px;color:#666;letter-spacing:0.05px">Select all</div>
<div style="left:22.700000000000045px;top:30px;width:21px;height:21px;border:3px solid #c8c8c8;box-sizing:border-box"></div>
<div style="left:57.40000000000009px;top:31.38px;font-size:15.5px;color:#666;letter-spacing:-0.25px">AABID ROSHAN ALI</div>
<div style="left:22.700000000000045px;top:56px;width:21px;height:21px;border:3px solid #c8c8c8;box-sizing:border-box"></div>
<div style="left:57.40000000000009px;top:57.88px;font-size:15.5px;color:#666;letter-spacing:-0.25px">AAITA SINGH LOPCHAN</div>
<div style="left:22.700000000000045px;top:83px;width:21px;height:21px;border:3px solid #c8c8c8;box-sizing:border-box"></div>
<div style="left:57.40000000000009px;top:84.38px;font-size:15.5px;color:#666;letter-spacing:-0.25px">AAMIR KHAN MAHBOOBSAB</div>
<div style="left:22.700000000000045px;top:109px;width:21px;height:21px;border:3px solid #c8c8c8;box-sizing:border-box"></div>
<div style="left:57.40000000000009px;top:110.88px;font-size:15.5px;color:#666;letter-spacing:-0.25px">AAMIR RAFIQ</div>
<div style="left:22.700000000000045px;top:136px;width:21px;height:21px;border:3px solid #c8c8c8;box-sizing:border-box"></div>
<div style="left:57.40000000000009px;top:137.38px;font-size:15.5px;color:#666;letter-spacing:-0.25px">AAMOD KUMAR YADAV</div>
<div style="left:22.700000000000045px;top:162px;width:21px;height:21px;border:3px solid #c8c8c8;box-sizing:border-box"></div>
<div style="left:57.40000000000009px;top:163.88px;font-size:15.5px;color:#666;letter-spacing:-0.25px">AANAND KUMAR MUKHIYA</div>
<div style="left:22.700000000000045px;top:189px;width:21px;height:21px;border:3px solid #c8c8c8;box-sizing:border-box"></div>
<div style="left:57.40000000000009px;top:190.38px;font-size:15.5px;color:#666;letter-spacing:-0.25px">AANAND KUMAR YADAV</div>
</div>
<div style="left:68px;top:463px;width:204px;height:73px;border:2px solid #000;box-sizing:border-box;background:#fff"></div>
<div style="left:-436.0px;width:1200px;text-align:center;top:466.07px;font-size:20px;color:#a3a3a3;">Full Basic</div>
<div style="left:-429.0px;width:1200px;text-align:center;top:499.89px;font-size:17.5px;color:#2c22a6;">22,855,099.00</div>
<div style="left:270px;top:463px;width:203px;height:73px;border:2px solid #000;box-sizing:border-box;background:#fff"></div>
<div style="left:-234.5px;width:1200px;text-align:center;top:466.07px;font-size:20px;color:#a3a3a3;">Full Accomodation</div>
<div style="left:-227.5px;width:1200px;text-align:center;top:499.89px;font-size:17.5px;color:#2c22a6;">6,082,150.00</div>
<div style="left:471px;top:463px;width:203px;height:73px;border:2px solid #000;box-sizing:border-box;background:#fff"></div>
<div style="left:-33.5px;width:1200px;text-align:center;top:466.07px;font-size:20px;color:#a3a3a3;">Full Mobile</div>
<div style="left:-26.5px;width:1200px;text-align:center;top:499.89px;font-size:17.5px;color:#2c22a6;">437,900.00</div>
<div style="left:672px;top:463px;width:204px;height:73px;border:2px solid #000;box-sizing:border-box;background:#fff"></div>
<div style="left:168.0px;width:1200px;text-align:center;top:466.07px;font-size:20px;color:#a3a3a3;">Full Transportation</div>
<div style="left:175.0px;width:1200px;text-align:center;top:499.89px;font-size:17.5px;color:#2c22a6;">1,769,000.00</div>
<div style="left:874px;top:463px;width:204px;height:73px;border:2px solid #000;box-sizing:border-box;background:#fff"></div>
<div style="left:370.0px;width:1200px;text-align:center;top:466.07px;font-size:20px;color:#a3a3a3;">Full Skill</div>
<div style="left:377.0px;width:1200px;text-align:center;top:499.89px;font-size:17.5px;color:#2c22a6;">2,047,473.00</div>
<div style="left:1076px;top:463px;width:204px;height:73px;border:2px solid #000;box-sizing:border-box;background:#fff"></div>
<div style="left:572.0px;width:1200px;text-align:center;top:466.07px;font-size:20px;color:#a3a3a3;">Full Others</div>
<div style="left:579.0px;width:1200px;text-align:center;top:499.89px;font-size:17.5px;color:#2c22a6;">114,027.50</div>
<div style="left:1278px;top:463px;width:183px;height:73px;border:2px solid #000;box-sizing:border-box;background:#fff"></div>
<div style="left:763.5px;width:1200px;text-align:center;top:466.07px;font-size:20px;color:#a3a3a3;">Full Fuel</div>
<div style="left:770.5px;width:1200px;text-align:center;top:499.89px;font-size:17.5px;color:#2c22a6;">589,875.00</div>
<div style="left:1459px;top:463px;width:191px;height:73px;border:2px solid #000;box-sizing:border-box;background:#fff"></div>
<div style="left:948.5px;width:1200px;text-align:center;top:466.07px;font-size:20px;color:#a3a3a3;">Full Ticket</div>
<div style="left:955.5px;width:1200px;text-align:center;top:499.89px;font-size:17.5px;color:#2c22a6;">629,835.00</div>
<div style="left:1648px;top:463px;width:190px;height:73px;border:2px solid #000;box-sizing:border-box;background:#fff"></div>
<div style="left:1137.0px;width:1200px;text-align:center;top:466.07px;font-size:20px;color:#a3a3a3;">Full Commuting</div>
<div style="left:1144.0px;width:1200px;text-align:center;top:499.89px;font-size:17.5px;color:#2c22a6;">188,150.00</div>
<div style="left:1836px;top:463px;width:169px;height:73px;border:2px solid #000;box-sizing:border-box;background:#fff"></div>
<div style="left:1314.5px;width:1200px;text-align:center;top:466.07px;font-size:20px;color:#a3a3a3;">Full SafetyS...</div>
<div style="left:1321.5px;width:1200px;text-align:center;top:499.89px;font-size:17.5px;color:#2c22a6;">71,475.00</div>
<div style="left:2003px;top:463px;width:170px;height:73px;border:2px solid #000;box-sizing:border-box;background:#fff"></div>
<div style="left:1482.0px;width:1200px;text-align:center;top:466.07px;font-size:20px;color:#a3a3a3;">Full Food</div>
<div style="left:1489.0px;width:1200px;text-align:center;top:499.89px;font-size:17.5px;color:#2c22a6;">167,900.00</div>
<div style="left:68px;top:535.5px;width:204px;height:72.5px;border:2px solid #000;box-sizing:border-box;background:#fff"></div>
<div style="left:-436.0px;width:1200px;text-align:center;top:538.57px;font-size:20px;color:#a3a3a3;">Basic</div>
<div style="left:-429.0px;width:1200px;text-align:center;top:572.59px;font-size:17.5px;color:#e3626c;">21,586,432.27</div>
<div style="left:270px;top:535.5px;width:203px;height:72.5px;border:2px solid #000;box-sizing:border-box;background:#fff"></div>
<div style="left:-234.5px;width:1200px;text-align:center;top:538.57px;font-size:20px;color:#a3a3a3;">Accomodation</div>
<div style="left:-227.5px;width:1200px;text-align:center;top:572.59px;font-size:17.5px;color:#e3626c;">5,974,526.72</div>
<div style="left:471px;top:535.5px;width:203px;height:72.5px;border:2px solid #000;box-sizing:border-box;background:#fff"></div>
<div style="left:-33.5px;width:1200px;text-align:center;top:538.57px;font-size:20px;color:#a3a3a3;">Mobile</div>
<div style="left:-26.5px;width:1200px;text-align:center;top:572.59px;font-size:17.5px;color:#e3626c;">428,865.15</div>
<div style="left:672px;top:535.5px;width:204px;height:72.5px;border:2px solid #000;box-sizing:border-box;background:#fff"></div>
<div style="left:168.0px;width:1200px;text-align:center;top:538.57px;font-size:20px;color:#a3a3a3;">Transportation</div>
<div style="left:175.0px;width:1200px;text-align:center;top:572.59px;font-size:17.5px;color:#e3626c;">1,736,706.67</div>
<div style="left:874px;top:535.5px;width:204px;height:72.5px;border:2px solid #000;box-sizing:border-box;background:#fff"></div>
<div style="left:370.0px;width:1200px;text-align:center;top:538.57px;font-size:20px;color:#a3a3a3;">Skill</div>
<div style="left:377.0px;width:1200px;text-align:center;top:572.59px;font-size:17.5px;color:#e3626c;">2,015,277.31</div>
<div style="left:1076px;top:535.5px;width:204px;height:72.5px;border:2px solid #000;box-sizing:border-box;background:#fff"></div>
<div style="left:572.0px;width:1200px;text-align:center;top:538.57px;font-size:20px;color:#a3a3a3;">Others</div>
<div style="left:579.0px;width:1200px;text-align:center;top:572.59px;font-size:17.5px;color:#e3626c;">102,262.33</div>
<div style="left:1278px;top:535.5px;width:183px;height:72.5px;border:2px solid #000;box-sizing:border-box;background:#fff"></div>
<div style="left:763.5px;width:1200px;text-align:center;top:538.57px;font-size:20px;color:#a3a3a3;">Fuel</div>
<div style="left:770.5px;width:1200px;text-align:center;top:572.59px;font-size:17.5px;color:#e3626c;">548,311.74</div>
<div style="left:1459px;top:535.5px;width:191px;height:72.5px;border:2px solid #000;box-sizing:border-box;background:#fff"></div>
<div style="left:948.5px;width:1200px;text-align:center;top:538.57px;font-size:20px;color:#a3a3a3;">Ticket</div>
<div style="left:955.5px;width:1200px;text-align:center;top:572.59px;font-size:17.5px;color:#e3626c;">626,329.02</div>
<div style="left:1648px;top:535.5px;width:190px;height:72.5px;border:2px solid #000;box-sizing:border-box;background:#fff"></div>
<div style="left:1137.0px;width:1200px;text-align:center;top:538.57px;font-size:20px;color:#a3a3a3;">Commuting</div>
<div style="left:1144.0px;width:1200px;text-align:center;top:572.59px;font-size:17.5px;color:#e3626c;">176,010.02</div>
<div style="left:1836px;top:535.5px;width:169px;height:72.5px;border:2px solid #000;box-sizing:border-box;background:#fff"></div>
<div style="left:1314.5px;width:1200px;text-align:center;top:538.57px;font-size:20px;color:#a3a3a3;">Safetyshoe</div>
<div style="left:1321.5px;width:1200px;text-align:center;top:572.59px;font-size:17.5px;color:#e3626c;">71,084.86</div>
<div style="left:2003px;top:535.5px;width:170px;height:72.5px;border:2px solid #000;box-sizing:border-box;background:#fff"></div>
<div style="left:1482.0px;width:1200px;text-align:center;top:538.57px;font-size:20px;color:#a3a3a3;">Food</div>
<div style="left:1489.0px;width:1200px;text-align:center;top:572.59px;font-size:17.5px;color:#e3626c;">157,433.34</div>
<div style="left:70px;top:610px;width:577px;height:79px;border:2px solid #000;box-sizing:border-box;background:#fff"></div>
<div style="left:-248.5px;width:1200px;text-align:center;top:613.07px;font-size:20px;color:#a3a3a3;">Employee Count</div>
<div style="left:-239.5px;width:1200px;text-align:center;top:650.19px;font-size:17.5px;color:#a0669a;">9964</div>
<div style="left:990px;top:613px;width:577px;height:79px;border:2px solid #000;box-sizing:border-box;background:#fff"></div>
<div style="left:671.5px;width:1200px;text-align:center;top:617.07px;font-size:20px;color:#a3a3a3;">Full Salary</div>
<div style="left:680.5px;width:1200px;text-align:center;top:653.69px;font-size:17.5px;color:#2c22a6;">34,952,884.50</div>
<div style="left:1595px;top:613px;width:185px;height:74px;border:2px solid #000;box-sizing:border-box;background:#fff"></div>
<div style="left:1082.5px;width:1200px;text-align:center;top:616.47px;font-size:20px;color:#a3a3a3;">Normal Overtime</div>
<div style="left:1089.5px;width:1200px;text-align:center;top:650.89px;font-size:17.5px;color:#e3626c;">4,130,897.89</div>
<div style="left:1778px;top:613px;width:185px;height:74px;border:2px solid #000;box-sizing:border-box;background:#fff"></div>
<div style="left:1265.5px;width:1200px;text-align:center;top:616.47px;font-size:20px;color:#a3a3a3;">Holiday Overti...</div>
<div style="left:1272.5px;width:1200px;text-align:center;top:650.89px;font-size:17.5px;color:#e3626c;">612,350.04</div>
<div style="left:1988px;top:613px;width:184px;height:74px;border:2px solid #000;box-sizing:border-box;background:#fff"></div>
<div style="left:1475.0px;width:1200px;text-align:center;top:616.47px;font-size:20px;color:#a3a3a3;">Total Overtime</div>
<div style="left:1482.0px;width:1200px;text-align:center;top:650.89px;font-size:17.5px;color:#e3626c;">4,743,247.93</div>
<div style="left:1595px;top:684px;width:185px;height:75px;border:2px solid #000;box-sizing:border-box;background:#fff"></div>
<div style="left:1082.5px;width:1200px;text-align:center;top:689.47px;font-size:20px;color:#a3a3a3;">Adjustments</div>
<div style="left:1089.5px;width:1200px;text-align:center;top:723.89px;font-size:17.5px;color:#e3626c;">227,629.14</div>
<div style="left:1778px;top:684px;width:185px;height:75px;border:2px solid #000;box-sizing:border-box;background:#fff"></div>
<div style="left:1265.5px;width:1200px;text-align:center;top:689.47px;font-size:20px;color:#a3a3a3;">Deductions</div>
<div style="left:1272.5px;width:1200px;text-align:center;top:723.89px;font-size:17.5px;color:#eb9a72;">202,839.63</div>
<div style="left:1988px;top:684px;width:184px;height:75px;border:2px solid #000;box-sizing:border-box;background:#fff"></div>
<div style="left:1475.0px;width:1200px;text-align:center;top:689.47px;font-size:20px;color:#a3a3a3;">Net Salary</div>
<div style="left:1482.0px;width:1200px;text-align:center;top:723.89px;font-size:17.5px;color:#e3626c;">38,156,054.00</div>
<div style="left:1592px;top:767px;width:289px;height:66px;background:#000"></div>
<div style="left:1594px;top:788px;width:285px;height:43.5px;background:#fd7ce9"></div>
<div style="left:1130.5px;width:1200px;text-align:center;top:768.55px;font-size:17.9px;color:#fff;">Accumalated EOS</div>
<div style="left:1138.5px;width:1200px;text-align:center;top:797.42px;font-size:17.7px;color:#2a2a2a;">60,780,545.28</div>
<div style="left:1881px;top:767px;width:289px;height:66px;background:#000"></div>
<div style="left:1883px;top:788px;width:285px;height:43.5px;background:#7fdad3"></div>
<div style="left:1419.5px;width:1200px;text-align:center;top:768.55px;font-size:17.9px;color:#fff;">Accumalated Insurance</div>
<div style="left:1427.5px;width:1200px;text-align:center;top:797.42px;font-size:17.7px;color:#2a2a2a;">5,972,944.00</div>
<div style="left:1592px;top:832px;width:289px;height:69px;background:#000"></div>
<div style="left:1594px;top:854px;width:285px;height:45.5px;background:#f6de82"></div>
<div style="left:1130.5px;width:1200px;text-align:center;top:834.65px;font-size:17.9px;color:#fff;">Accumalated Labor Ticket</div>
<div style="left:1138.5px;width:1200px;text-align:center;top:865.52px;font-size:17.7px;color:#2a2a2a;">11,211,384.16</div>
<div style="left:1881px;top:832px;width:289px;height:69px;background:#000"></div>
<div style="left:1883px;top:854px;width:285px;height:45.5px;background:#f9aaa7"></div>
<div style="left:1419.5px;width:1200px;text-align:center;top:834.65px;font-size:17.9px;color:#fff;">Accumalated Leave</div>
<div style="left:1427.5px;width:1200px;text-align:center;top:865.52px;font-size:17.7px;color:#2a2a2a;">28,692,349.05</div>
<div style="left:1594px;top:936px;width:576px;height:66px;background:#000"></div>
<div style="left:1596px;top:957.5px;width:572px;height:43.0px;background:#fb00cf"></div>
<div style="left:1276.0px;width:1200px;text-align:center;top:937.76px;font-size:18px;color:#fff;">Increased EOS</div>
<div style="left:1284.0px;width:1200px;text-align:center;top:959.56px;font-size:39.5px;color:#fff;">1,466,628.15</div>
<div style="left:1594px;top:1003px;width:576px;height:69px;background:#000"></div>
<div style="left:1596px;top:1024px;width:572px;height:46.5px;background:#00b6a9"></div>
<div style="left:1276.0px;width:1200px;text-align:center;top:1005.56px;font-size:18px;color:#fff;">Increased Insurance</div>
<div style="left:1284.0px;width:1200px;text-align:center;top:1028.36px;font-size:39.5px;color:#fff;">497,745.29</div>
<div style="left:1594px;top:1073px;width:576px;height:69px;background:#000"></div>
<div style="left:1596px;top:1094px;width:572px;height:46.5px;background:#f2c80f"></div>
<div style="left:1276.0px;width:1200px;text-align:center;top:1075.26px;font-size:18px;color:#fff;">Increased Labor Ticket</div>
<div style="left:1284.0px;width:1200px;text-align:center;top:1098.06px;font-size:39.5px;color:#fff;">683,416.13</div>
<div style="left:1594px;top:1170px;width:578px;height:66.5px;background:#000"></div>
<div style="left:1596px;top:1191.5px;width:574px;height:43.5px;background:#fd625e"></div>
<div style="left:1277.0px;width:1200px;text-align:center;top:1172.66px;font-size:18px;color:#fff;">Monthly Leave Cost</div>
<div style="left:1285.0px;width:1200px;text-align:center;top:1193.96px;font-size:39.5px;color:#fff;">2,602,850.45</div>
<div style="left:1595px;top:1237.5px;width:582px;height:66.5px;background:#000"></div>
<div style="left:1597px;top:1258.5px;width:578px;height:44.0px;background:#fe9666"></div>
<div style="left:1280.0px;width:1200px;text-align:center;top:1239.66px;font-size:18px;color:#fff;">Leave Difference From Previous Month</div>
<div style="left:1288.0px;width:1200px;text-align:center;top:1260.96px;font-size:39.5px;color:#fff;">-129,839.97</div>
<div style="left:76px;top:695px;width:1492px;height:602px;overflow:hidden">
<div style="left:9px;top:6.44px;font-size:17.2px;color:#3b3b3b;letter-spacing:-0.1px">Employee Code</div>
<div style="left:150px;top:6.44px;font-size:17.2px;color:#3b3b3b;letter-spacing:-0.1px">Name</div>
<div style="left:525px;top:6.44px;font-size:17.2px;color:#3b3b3b;letter-spacing:-0.1px">Title</div>
<div style="left:865px;top:6.44px;font-size:17.2px;color:#3b3b3b;letter-spacing:-0.1px">Category</div>
<div style="left:955px;top:6.44px;font-size:17.2px;color:#3b3b3b;letter-spacing:-0.1px">Line Of Business</div>
<div style="left:1144px;top:6.44px;font-size:17.2px;color:#3b3b3b;letter-spacing:-0.1px">Department</div>
<div style="left:1315px;top:6.44px;font-size:17.2px;color:#3b3b3b;letter-spacing:-0.1px">Date Of Join</div>
<div style="left:1472px;top:6.44px;font-size:17.2px;color:#3b3b3b;letter-spacing:-0.1px">Project Code</div>
<div style="left:141px;top:1px;width:1px;height:36px;background:#d6ecec"></div>
<div style="left:516px;top:1px;width:1px;height:36px;background:#d6ecec"></div>
<div style="left:856px;top:1px;width:1px;height:36px;background:#d6ecec"></div>
<div style="left:1135px;top:1px;width:1px;height:36px;background:#d6ecec"></div>
<div style="left:1306px;top:1px;width:1px;height:36px;background:#d6ecec"></div>
<div style="left:1463px;top:1px;width:1px;height:36px;background:#d6ecec"></div>
<div style="left:9px;top:27px;width:0;height:0;border-left:6px solid transparent;border-right:6px solid transparent;border-bottom:6px solid #333"></div>
<div style="left:141px;top:39.40px;width:1px;height:22.58px;background:#f3f3f3"></div>
<div style="left:516px;top:39.40px;width:1px;height:22.58px;background:#f3f3f3"></div>
<div style="left:856px;top:39.40px;width:1px;height:22.58px;background:#f3f3f3"></div>
<div style="left:1135px;top:39.40px;width:1px;height:22.58px;background:#f3f3f3"></div>
<div style="left:1306px;top:39.40px;width:1px;height:22.58px;background:#f3f3f3"></div>
<div style="left:1463px;top:39.40px;width:1px;height:22.58px;background:#f3f3f3"></div>
<div style="left:9px;top:43.99px;font-size:15.6px;color:#383838;letter-spacing:0px">150198</div>
<div style="left:150px;top:43.99px;font-size:15.6px;color:#383838;letter-spacing:-0.3px">HUM BAHADUR THAPA</div>
<div style="left:525px;top:43.99px;font-size:15.6px;color:#383838;letter-spacing:-0.95px">TIMEKEEPER (STAFF)</div>
<div style="left:865px;top:43.99px;font-size:15.6px;color:#383838;letter-spacing:-1.0px">STAFF</div>
<div style="left:955px;top:43.99px;font-size:15.6px;color:#383838;letter-spacing:-0.95px">BOTC-OPERATIONS</div>
<div style="left:1144px;top:43.99px;font-size:15.6px;color:#383838;letter-spacing:-1.1px">PROJECT</div>
<div style="left:1315px;top:43.99px;font-size:15.6px;color:#383838;letter-spacing:0px">11 February, 2002</div>
<div style="left:1472px;top:43.99px;font-size:15.6px;color:#383838;letter-spacing:0px">999</div>
<div style="left:0px;top:63.98px;width:1492px;height:26.58px;background:#eeeeee"></div>
<div style="left:141px;top:65.98px;width:1px;height:22.58px;background:#f6f6f6"></div>
<div style="left:516px;top:65.98px;width:1px;height:22.58px;background:#f6f6f6"></div>
<div style="left:856px;top:65.98px;width:1px;height:22.58px;background:#f6f6f6"></div>
<div style="left:1135px;top:65.98px;width:1px;height:22.58px;background:#f6f6f6"></div>
<div style="left:1306px;top:65.98px;width:1px;height:22.58px;background:#f6f6f6"></div>
<div style="left:1463px;top:65.98px;width:1px;height:22.58px;background:#f6f6f6"></div>
<div style="left:9px;top:70.57px;font-size:15.6px;color:#383838;letter-spacing:0px">150203</div>
<div style="left:150px;top:70.57px;font-size:15.6px;color:#383838;letter-spacing:-0.3px">SANU BABU SILWAL</div>
<div style="left:525px;top:70.57px;font-size:15.6px;color:#383838;letter-spacing:-0.95px">SENIOR LAND SURVEYOR</div>
<div style="left:865px;top:70.57px;font-size:15.6px;color:#383838;letter-spacing:-1.0px">STAFF</div>
<div style="left:955px;top:70.57px;font-size:15.6px;color:#383838;letter-spacing:-0.95px">BOTC-OPERATIONS</div>
<div style="left:1144px;top:70.57px;font-size:15.6px;color:#383838;letter-spacing:-1.1px">LAND SURVEY</div>
<div style="left:1315px;top:70.57px;font-size:15.6px;color:#383838;letter-spacing:0px">25 February, 2002</div>
<div style="left:1472px;top:70.57px;font-size:15.6px;color:#383838;letter-spacing:0px">160</div>
<div style="left:141px;top:92.56px;width:1px;height:22.58px;background:#f3f3f3"></div>
<div style="left:516px;top:92.56px;width:1px;height:22.58px;background:#f3f3f3"></div>
<div style="left:856px;top:92.56px;width:1px;height:22.58px;background:#f3f3f3"></div>
<div style="left:1135px;top:92.56px;width:1px;height:22.58px;background:#f3f3f3"></div>
<div style="left:1306px;top:92.56px;width:1px;height:22.58px;background:#f3f3f3"></div>
<div style="left:1463px;top:92.56px;width:1px;height:22.58px;background:#f3f3f3"></div>
<div style="left:9px;top:97.15px;font-size:15.6px;color:#383838;letter-spacing:0px">150204</div>
<div style="left:150px;top:97.15px;font-size:15.6px;color:#383838;letter-spacing:-0.3px">KANCHHA TAMANG</div>
<div style="left:525px;top:97.15px;font-size:15.6px;color:#383838;letter-spacing:-0.95px">SENIOR CHARGE HAND</div>
<div style="left:865px;top:97.15px;font-size:15.6px;color:#383838;letter-spacing:-1.0px">LABOUR</div>
<div style="left:955px;top:97.15px;font-size:15.6px;color:#383838;letter-spacing:-0.95px">BOTC-OPERATIONS</div>
<div style="left:1144px;top:97.15px;font-size:15.6px;color:#383838;letter-spacing:-1.1px">PROJECT</div>
<div style="left:1315px;top:97.15px;font-size:15.6px;color:#383838;letter-spacing:0px">20 March, 2002</div>
<div style="left:1472px;top:97.15px;font-size:15.6px;color:#383838;letter-spacing:0px">140</div>
<div style="left:0px;top:117.14px;width:1492px;height:26.58px;background:#eeeeee"></div>
<div style="left:141px;top:119.14px;width:1px;height:22.58px;background:#f6f6f6"></div>
<div style="left:516px;top:119.14px;width:1px;height:22.58px;background:#f6f6f6"></div>
<div style="left:856px;top:119.14px;width:1px;height:22.58px;background:#f6f6f6"></div>
<div style="left:1135px;top:119.14px;width:1px;height:22.58px;background:#f6f6f6"></div>
<div style="left:1306px;top:119.14px;width:1px;height:22.58px;background:#f6f6f6"></div>
<div style="left:1463px;top:119.14px;width:1px;height:22.58px;background:#f6f6f6"></div>
<div style="left:9px;top:123.73px;font-size:15.6px;color:#383838;letter-spacing:0px">150204</div>
<div style="left:150px;top:123.73px;font-size:15.6px;color:#383838;letter-spacing:-0.3px">KANCHHA TAMANG</div>
<div style="left:525px;top:123.73px;font-size:15.6px;color:#383838;letter-spacing:-0.95px">SENIOR CHARGE HAND</div>
<div style="left:865px;top:123.73px;font-size:15.6px;color:#383838;letter-spacing:-1.0px">LABOUR</div>
<div style="left:955px;top:123.73px;font-size:15.6px;color:#383838;letter-spacing:-0.95px">BOTC-OPERATIONS</div>
<div style="left:1144px;top:123.73px;font-size:15.6px;color:#383838;letter-spacing:-1.1px">PROJECT</div>
<div style="left:1315px;top:123.73px;font-size:15.6px;color:#383838;letter-spacing:0px">20 March, 2002</div>
<div style="left:1472px;top:123.73px;font-size:15.6px;color:#383838;letter-spacing:0px">170</div>
<div style="left:141px;top:145.72px;width:1px;height:22.58px;background:#f3f3f3"></div>
<div style="left:516px;top:145.72px;width:1px;height:22.58px;background:#f3f3f3"></div>
<div style="left:856px;top:145.72px;width:1px;height:22.58px;background:#f3f3f3"></div>
<div style="left:1135px;top:145.72px;width:1px;height:22.58px;background:#f3f3f3"></div>
<div style="left:1306px;top:145.72px;width:1px;height:22.58px;background:#f3f3f3"></div>
<div style="left:1463px;top:145.72px;width:1px;height:22.58px;background:#f3f3f3"></div>
<div style="left:9px;top:150.31px;font-size:15.6px;color:#383838;letter-spacing:0px">150204</div>
<div style="left:150px;top:150.31px;font-size:15.6px;color:#383838;letter-spacing:-0.3px">KANCHHA TAMANG</div>
<div style="left:525px;top:150.31px;font-size:15.6px;color:#383838;letter-spacing:-0.95px">SENIOR CHARGE HAND</div>
<div style="left:865px;top:150.31px;font-size:15.6px;color:#383838;letter-spacing:-1.0px">LABOUR</div>
<div style="left:955px;top:150.31px;font-size:15.6px;color:#383838;letter-spacing:-0.95px">BOTC-OPERATIONS</div>
<div style="left:1144px;top:150.31px;font-size:15.6px;color:#383838;letter-spacing:-1.1px">PROJECT</div>
<div style="left:1315px;top:150.31px;font-size:15.6px;color:#383838;letter-spacing:0px">20 March, 2002</div>
<div style="left:1472px;top:150.31px;font-size:15.6px;color:#383838;letter-spacing:0px">180</div>
<div style="left:0px;top:170.30px;width:1492px;height:26.58px;background:#eeeeee"></div>
<div style="left:141px;top:172.30px;width:1px;height:22.58px;background:#f6f6f6"></div>
<div style="left:516px;top:172.30px;width:1px;height:22.58px;background:#f6f6f6"></div>
<div style="left:856px;top:172.30px;width:1px;height:22.58px;background:#f6f6f6"></div>
<div style="left:1135px;top:172.30px;width:1px;height:22.58px;background:#f6f6f6"></div>
<div style="left:1306px;top:172.30px;width:1px;height:22.58px;background:#f6f6f6"></div>
<div style="left:1463px;top:172.30px;width:1px;height:22.58px;background:#f6f6f6"></div>
<div style="left:9px;top:176.89px;font-size:15.6px;color:#383838;letter-spacing:0px">150225</div>
<div style="left:150px;top:176.89px;font-size:15.6px;color:#383838;letter-spacing:-0.3px">RAHMAT KARIM NAEAB</div>
<div style="left:525px;top:176.89px;font-size:15.6px;color:#383838;letter-spacing:-0.95px">RACK MAN</div>
<div style="left:865px;top:176.89px;font-size:15.6px;color:#383838;letter-spacing:-1.0px">LABOUR</div>
<div style="left:955px;top:176.89px;font-size:15.6px;color:#383838;letter-spacing:-0.95px">BOTC-OPERATIONS</div>
<div style="left:1144px;top:176.89px;font-size:15.6px;color:#383838;letter-spacing:-1.1px">PROJECT</div>
<div style="left:1315px;top:176.89px;font-size:15.6px;color:#383838;letter-spacing:0px">25 March, 2001</div>
<div style="left:1472px;top:176.89px;font-size:15.6px;color:#383838;letter-spacing:0px">140</div>
<div style="left:141px;top:198.88px;width:1px;height:22.58px;background:#f3f3f3"></div>
<div style="left:516px;top:198.88px;width:1px;height:22.58px;background:#f3f3f3"></div>
<div style="left:856px;top:198.88px;width:1px;height:22.58px;background:#f3f3f3"></div>
<div style="left:1135px;top:198.88px;width:1px;height:22.58px;background:#f3f3f3"></div>
<div style="left:1306px;top:198.88px;width:1px;height:22.58px;background:#f3f3f3"></div>
<div style="left:1463px;top:198.88px;width:1px;height:22.58px;background:#f3f3f3"></div>
<div style="left:9px;top:203.47px;font-size:15.6px;color:#383838;letter-spacing:0px">150225</div>
<div style="left:150px;top:203.47px;font-size:15.6px;color:#383838;letter-spacing:-0.3px">RAHMAT KARIM NAEAB</div>
<div style="left:525px;top:203.47px;font-size:15.6px;color:#383838;letter-spacing:-0.95px">RACK MAN</div>
<div style="left:865px;top:203.47px;font-size:15.6px;color:#383838;letter-spacing:-1.0px">LABOUR</div>
<div style="left:955px;top:203.47px;font-size:15.6px;color:#383838;letter-spacing:-0.95px">BOTC-OPERATIONS</div>
<div style="left:1144px;top:203.47px;font-size:15.6px;color:#383838;letter-spacing:-1.1px">PROJECT</div>
<div style="left:1315px;top:203.47px;font-size:15.6px;color:#383838;letter-spacing:0px">25 March, 2001</div>
<div style="left:1472px;top:203.47px;font-size:15.6px;color:#383838;letter-spacing:0px">170</div>
<div style="left:0px;top:223.46px;width:1492px;height:26.58px;background:#eeeeee"></div>
<div style="left:141px;top:225.46px;width:1px;height:22.58px;background:#f6f6f6"></div>
<div style="left:516px;top:225.46px;width:1px;height:22.58px;background:#f6f6f6"></div>
<div style="left:856px;top:225.46px;width:1px;height:22.58px;background:#f6f6f6"></div>
<div style="left:1135px;top:225.46px;width:1px;height:22.58px;background:#f6f6f6"></div>
<div style="left:1306px;top:225.46px;width:1px;height:22.58px;background:#f6f6f6"></div>
<div style="left:1463px;top:225.46px;width:1px;height:22.58px;background:#f6f6f6"></div>
<div style="left:9px;top:230.05px;font-size:15.6px;color:#383838;letter-spacing:0px">150225</div>
<div style="left:150px;top:230.05px;font-size:15.6px;color:#383838;letter-spacing:-0.3px">RAHMAT KARIM NAEAB</div>
<div style="left:525px;top:230.05px;font-size:15.6px;color:#383838;letter-spacing:-0.95px">RACK MAN</div>
<div style="left:865px;top:230.05px;font-size:15.6px;color:#383838;letter-spacing:-1.0px">LABOUR</div>
<div style="left:955px;top:230.05px;font-size:15.6px;color:#383838;letter-spacing:-0.95px">BOTC-OPERATIONS</div>
<div style="left:1144px;top:230.05px;font-size:15.6px;color:#383838;letter-spacing:-1.1px">PROJECT</div>
<div style="left:1315px;top:230.05px;font-size:15.6px;color:#383838;letter-spacing:0px">25 March, 2001</div>
<div style="left:1472px;top:230.05px;font-size:15.6px;color:#383838;letter-spacing:0px">170</div>
<div style="left:141px;top:252.04px;width:1px;height:22.58px;background:#f3f3f3"></div>
<div style="left:516px;top:252.04px;width:1px;height:22.58px;background:#f3f3f3"></div>
<div style="left:856px;top:252.04px;width:1px;height:22.58px;background:#f3f3f3"></div>
<div style="left:1135px;top:252.04px;width:1px;height:22.58px;background:#f3f3f3"></div>
<div style="left:1306px;top:252.04px;width:1px;height:22.58px;background:#f3f3f3"></div>
<div style="left:1463px;top:252.04px;width:1px;height:22.58px;background:#f3f3f3"></div>
<div style="left:9px;top:256.63px;font-size:15.6px;color:#383838;letter-spacing:0px">150225</div>
<div style="left:150px;top:256.63px;font-size:15.6px;color:#383838;letter-spacing:-0.3px">RAHMAT KARIM NAEAB</div>
<div style="left:525px;top:256.63px;font-size:15.6px;color:#383838;letter-spacing:-0.95px">RACK MAN</div>
<div style="left:865px;top:256.63px;font-size:15.6px;color:#383838;letter-spacing:-1.0px">LABOUR</div>
<div style="left:955px;top:256.63px;font-size:15.6px;color:#383838;letter-spacing:-0.95px">BOTC-OPERATIONS</div>
<div style="left:1144px;top:256.63px;font-size:15.6px;color:#383838;letter-spacing:-1.1px">PROJECT</div>
<div style="left:1315px;top:256.63px;font-size:15.6px;color:#383838;letter-spacing:0px">25 March, 2001</div>
<div style="left:1472px;top:256.63px;font-size:15.6px;color:#383838;letter-spacing:0px">170</div>
<div style="left:0px;top:276.62px;width:1492px;height:26.58px;background:#eeeeee"></div>
<div style="left:141px;top:278.62px;width:1px;height:22.58px;background:#f6f6f6"></div>
<div style="left:516px;top:278.62px;width:1px;height:22.58px;background:#f6f6f6"></div>
<div style="left:856px;top:278.62px;width:1px;height:22.58px;background:#f6f6f6"></div>
<div style="left:1135px;top:278.62px;width:1px;height:22.58px;background:#f6f6f6"></div>
<div style="left:1306px;top:278.62px;width:1px;height:22.58px;background:#f6f6f6"></div>
<div style="left:1463px;top:278.62px;width:1px;height:22.58px;background:#f6f6f6"></div>
<div style="left:9px;top:283.21px;font-size:15.6px;color:#383838;letter-spacing:0px">150225</div>
<div style="left:150px;top:283.21px;font-size:15.6px;color:#383838;letter-spacing:-0.3px">RAHMAT KARIM NAEAB</div>
<div style="left:525px;top:283.21px;font-size:15.6px;color:#383838;letter-spacing:-0.95px">RACK MAN</div>
<div style="left:865px;top:283.21px;font-size:15.6px;color:#383838;letter-spacing:-1.0px">LABOUR</div>
<div style="left:955px;top:283.21px;font-size:15.6px;color:#383838;letter-spacing:-0.95px">BOTC-OPERATIONS</div>
<div style="left:1144px;top:283.21px;font-size:15.6px;color:#383838;letter-spacing:-1.1px">PROJECT</div>
<div style="left:1315px;top:283.21px;font-size:15.6px;color:#383838;letter-spacing:0px">25 March, 2001</div>
<div style="left:1472px;top:283.21px;font-size:15.6px;color:#383838;letter-spacing:0px">170</div>
<div style="left:141px;top:305.20px;width:1px;height:22.58px;background:#f3f3f3"></div>
<div style="left:516px;top:305.20px;width:1px;height:22.58px;background:#f3f3f3"></div>
<div style="left:856px;top:305.20px;width:1px;height:22.58px;background:#f3f3f3"></div>
<div style="left:1135px;top:305.20px;width:1px;height:22.58px;background:#f3f3f3"></div>
<div style="left:1306px;top:305.20px;width:1px;height:22.58px;background:#f3f3f3"></div>
<div style="left:1463px;top:305.20px;width:1px;height:22.58px;background:#f3f3f3"></div>
<div style="left:9px;top:309.79px;font-size:15.6px;color:#383838;letter-spacing:0px">150225</div>
<div style="left:150px;top:309.79px;font-size:15.6px;color:#383838;letter-spacing:-0.3px">RAHMAT KARIM NAEAB</div>
<div style="left:525px;top:309.79px;font-size:15.6px;color:#383838;letter-spacing:-0.95px">RACK MAN</div>
<div style="left:865px;top:309.79px;font-size:15.6px;color:#383838;letter-spacing:-1.0px">LABOUR</div>
<div style="left:955px;top:309.79px;font-size:15.6px;color:#383838;letter-spacing:-0.95px">BOTC-OPERATIONS</div>
<div style="left:1144px;top:309.79px;font-size:15.6px;color:#383838;letter-spacing:-1.1px">PROJECT</div>
<div style="left:1315px;top:309.79px;font-size:15.6px;color:#383838;letter-spacing:0px">25 March, 2001</div>
<div style="left:1472px;top:309.79px;font-size:15.6px;color:#383838;letter-spacing:0px">190</div>
<div style="left:0px;top:329.78px;width:1492px;height:26.58px;background:#eeeeee"></div>
<div style="left:141px;top:331.78px;width:1px;height:22.58px;background:#f6f6f6"></div>
<div style="left:516px;top:331.78px;width:1px;height:22.58px;background:#f6f6f6"></div>
<div style="left:856px;top:331.78px;width:1px;height:22.58px;background:#f6f6f6"></div>
<div style="left:1135px;top:331.78px;width:1px;height:22.58px;background:#f6f6f6"></div>
<div style="left:1306px;top:331.78px;width:1px;height:22.58px;background:#f6f6f6"></div>
<div style="left:1463px;top:331.78px;width:1px;height:22.58px;background:#f6f6f6"></div>
<div style="left:9px;top:336.37px;font-size:15.6px;color:#383838;letter-spacing:0px">150226</div>
<div style="left:150px;top:336.37px;font-size:15.6px;color:#383838;letter-spacing:-0.3px">NOOR MOHAMMED UMAR</div>
<div style="left:525px;top:336.37px;font-size:15.6px;color:#383838;letter-spacing:-0.95px">TRAILER DRIVER</div>
<div style="left:865px;top:336.37px;font-size:15.6px;color:#383838;letter-spacing:-1.0px">LABOUR</div>
<div style="left:955px;top:336.37px;font-size:15.6px;color:#383838;letter-spacing:-0.95px">BOTC-OPERATIONS</div>
<div style="left:1144px;top:336.37px;font-size:15.6px;color:#383838;letter-spacing:-1.1px">GARAGE</div>
<div style="left:1315px;top:336.37px;font-size:15.6px;color:#383838;letter-spacing:0px">25 March, 2001</div>
<div style="left:1472px;top:336.37px;font-size:15.6px;color:#383838;letter-spacing:0px">999</div>
<div style="left:141px;top:358.36px;width:1px;height:22.58px;background:#f3f3f3"></div>
<div style="left:516px;top:358.36px;width:1px;height:22.58px;background:#f3f3f3"></div>
<div style="left:856px;top:358.36px;width:1px;height:22.58px;background:#f3f3f3"></div>
<div style="left:1135px;top:358.36px;width:1px;height:22.58px;background:#f3f3f3"></div>
<div style="left:1306px;top:358.36px;width:1px;height:22.58px;background:#f3f3f3"></div>
<div style="left:1463px;top:358.36px;width:1px;height:22.58px;background:#f3f3f3"></div>
<div style="left:9px;top:362.95px;font-size:15.6px;color:#383838;letter-spacing:0px">150227</div>
<div style="left:150px;top:362.95px;font-size:15.6px;color:#383838;letter-spacing:-0.3px">GHULAM MUSTAFA BROHI</div>
<div style="left:525px;top:362.95px;font-size:15.6px;color:#383838;letter-spacing:-0.95px">HEAVY DRIVER</div>
<div style="left:865px;top:362.95px;font-size:15.6px;color:#383838;letter-spacing:-1.0px">LABOUR</div>
<div style="left:955px;top:362.95px;font-size:15.6px;color:#383838;letter-spacing:-0.95px">BOTC-OPERATIONS</div>
<div style="left:1144px;top:362.95px;font-size:15.6px;color:#383838;letter-spacing:-1.1px">GARAGE</div>
<div style="left:1315px;top:362.95px;font-size:15.6px;color:#383838;letter-spacing:0px">5 April, 2001</div>
<div style="left:1472px;top:362.95px;font-size:15.6px;color:#383838;letter-spacing:0px">999</div>
<div style="left:0px;top:382.94px;width:1492px;height:26.58px;background:#eeeeee"></div>
<div style="left:141px;top:384.94px;width:1px;height:22.58px;background:#f6f6f6"></div>
<div style="left:516px;top:384.94px;width:1px;height:22.58px;background:#f6f6f6"></div>
<div style="left:856px;top:384.94px;width:1px;height:22.58px;background:#f6f6f6"></div>
<div style="left:1135px;top:384.94px;width:1px;height:22.58px;background:#f6f6f6"></div>
<div style="left:1306px;top:384.94px;width:1px;height:22.58px;background:#f6f6f6"></div>
<div style="left:1463px;top:384.94px;width:1px;height:22.58px;background:#f6f6f6"></div>
<div style="left:9px;top:389.53px;font-size:15.6px;color:#383838;letter-spacing:0px">150228</div>
<div style="left:150px;top:389.53px;font-size:15.6px;color:#383838;letter-spacing:-0.3px">SABIL KHAN MIR BAB KHAN</div>
<div style="left:525px;top:389.53px;font-size:15.6px;color:#383838;letter-spacing:-0.95px">LABOURER</div>
<div style="left:865px;top:389.53px;font-size:15.6px;color:#383838;letter-spacing:-1.0px">LABOUR</div>
<div style="left:955px;top:389.53px;font-size:15.6px;color:#383838;letter-spacing:-0.95px">BOTC-OPERATIONS</div>
<div style="left:1144px;top:389.53px;font-size:15.6px;color:#383838;letter-spacing:-1.1px">ASPHALT/PMB</div>
<div style="left:1315px;top:389.53px;font-size:15.6px;color:#383838;letter-spacing:0px">7 April, 2001</div>
<div style="left:1472px;top:389.53px;font-size:15.6px;color:#383838;letter-spacing:0px">170</div>
<div style="left:141px;top:411.52px;width:1px;height:22.58px;background:#f3f3f3"></div>
<div style="left:516px;top:411.52px;width:1px;height:22.58px;background:#f3f3f3"></div>
<div style="left:856px;top:411.52px;width:1px;height:22.58px;background:#f3f3f3"></div>
<div style="left:1135px;top:411.52px;width:1px;height:22.58px;background:#f3f3f3"></div>
<div style="left:1306px;top:411.52px;width:1px;height:22.58px;background:#f3f3f3"></div>
<div style="left:1463px;top:411.52px;width:1px;height:22.58px;background:#f3f3f3"></div>
<div style="left:9px;top:416.11px;font-size:15.6px;color:#383838;letter-spacing:0px">150229</div>
<div style="left:150px;top:416.11px;font-size:15.6px;color:#383838;letter-spacing:-0.3px">ZAHIR SHAH ASHRAF DIN</div>
<div style="left:525px;top:416.11px;font-size:15.6px;color:#383838;letter-spacing:-0.95px">GENERAL FOREMAN (ASPHALT)</div>
<div style="left:865px;top:416.11px;font-size:15.6px;color:#383838;letter-spacing:-1.0px">STAFF</div>
<div style="left:955px;top:416.11px;font-size:15.6px;color:#383838;letter-spacing:-0.95px">BOTC-OPERATIONS</div>
<div style="left:1144px;top:416.11px;font-size:15.6px;color:#383838;letter-spacing:-1.1px">PROJECT</div>
<div style="left:1315px;top:416.11px;font-size:15.6px;color:#383838;letter-spacing:0px">15 February, 1998</div>
<div style="left:1472px;top:416.11px;font-size:15.6px;color:#383838;letter-spacing:0px">140</div>
<div style="left:0px;top:436.10px;width:1492px;height:26.58px;background:#eeeeee"></div>
<div style="left:141px;top:438.10px;width:1px;height:22.58px;background:#f6f6f6"></div>
<div style="left:516px;top:438.10px;width:1px;height:22.58px;background:#f6f6f6"></div>
<div style="left:856px;top:438.10px;width:1px;height:22.58px;background:#f6f6f6"></div>
<div style="left:1135px;top:438.10px;width:1px;height:22.58px;background:#f6f6f6"></div>
<div style="left:1306px;top:438.10px;width:1px;height:22.58px;background:#f6f6f6"></div>
<div style="left:1463px;top:438.10px;width:1px;height:22.58px;background:#f6f6f6"></div>
<div style="left:9px;top:442.69px;font-size:15.6px;color:#383838;letter-spacing:0px">150229</div>
<div style="left:150px;top:442.69px;font-size:15.6px;color:#383838;letter-spacing:-0.3px">ZAHIR SHAH ASHRAF DIN</div>
<div style="left:525px;top:442.69px;font-size:15.6px;color:#383838;letter-spacing:-0.95px">GENERAL FOREMAN (ASPHALT)</div>
<div style="left:865px;top:442.69px;font-size:15.6px;color:#383838;letter-spacing:-1.0px">STAFF</div>
<div style="left:955px;top:442.69px;font-size:15.6px;color:#383838;letter-spacing:-0.95px">BOTC-OPERATIONS</div>
<div style="left:1144px;top:442.69px;font-size:15.6px;color:#383838;letter-spacing:-1.1px">PROJECT</div>
<div style="left:1315px;top:442.69px;font-size:15.6px;color:#383838;letter-spacing:0px">15 February, 1998</div>
<div style="left:1472px;top:442.69px;font-size:15.6px;color:#383838;letter-spacing:0px">170</div>
<div style="left:141px;top:464.68px;width:1px;height:22.58px;background:#f3f3f3"></div>
<div style="left:516px;top:464.68px;width:1px;height:22.58px;background:#f3f3f3"></div>
<div style="left:856px;top:464.68px;width:1px;height:22.58px;background:#f3f3f3"></div>
<div style="left:1135px;top:464.68px;width:1px;height:22.58px;background:#f3f3f3"></div>
<div style="left:1306px;top:464.68px;width:1px;height:22.58px;background:#f3f3f3"></div>
<div style="left:1463px;top:464.68px;width:1px;height:22.58px;background:#f3f3f3"></div>
<div style="left:9px;top:469.27px;font-size:15.6px;color:#383838;letter-spacing:0px">150229</div>
<div style="left:150px;top:469.27px;font-size:15.6px;color:#383838;letter-spacing:-0.3px">ZAHIR SHAH ASHRAF DIN</div>
<div style="left:525px;top:469.27px;font-size:15.6px;color:#383838;letter-spacing:-0.95px">GENERAL FOREMAN (ASPHALT)</div>
<div style="left:865px;top:469.27px;font-size:15.6px;color:#383838;letter-spacing:-1.0px">STAFF</div>
<div style="left:955px;top:469.27px;font-size:15.6px;color:#383838;letter-spacing:-0.95px">BOTC-OPERATIONS</div>
<div style="left:1144px;top:469.27px;font-size:15.6px;color:#383838;letter-spacing:-1.1px">PROJECT</div>
<div style="left:1315px;top:469.27px;font-size:15.6px;color:#383838;letter-spacing:0px">15 February, 1998</div>
<div style="left:1472px;top:469.27px;font-size:15.6px;color:#383838;letter-spacing:0px">180</div>
<div style="left:0px;top:489.26px;width:1492px;height:26.58px;background:#eeeeee"></div>
<div style="left:141px;top:491.26px;width:1px;height:22.58px;background:#f6f6f6"></div>
<div style="left:516px;top:491.26px;width:1px;height:22.58px;background:#f6f6f6"></div>
<div style="left:856px;top:491.26px;width:1px;height:22.58px;background:#f6f6f6"></div>
<div style="left:1135px;top:491.26px;width:1px;height:22.58px;background:#f6f6f6"></div>
<div style="left:1306px;top:491.26px;width:1px;height:22.58px;background:#f6f6f6"></div>
<div style="left:1463px;top:491.26px;width:1px;height:22.58px;background:#f6f6f6"></div>
<div style="left:9px;top:495.85px;font-size:15.6px;color:#383838;letter-spacing:0px">150231</div>
<div style="left:150px;top:495.85px;font-size:15.6px;color:#383838;letter-spacing:-0.3px">JOHN BOSCO GILBERT</div>
<div style="left:525px;top:495.85px;font-size:15.6px;color:#383838;letter-spacing:-0.95px">SENIOR ADMINISTRATION COORDINATOR</div>
<div style="left:865px;top:495.85px;font-size:15.6px;color:#383838;letter-spacing:-1.0px">STAFF</div>
<div style="left:955px;top:495.85px;font-size:15.6px;color:#383838;letter-spacing:-0.95px">BOTC-OPERATIONS</div>
<div style="left:1144px;top:495.85px;font-size:15.6px;color:#383838;letter-spacing:-1.1px">SECRETARY</div>
<div style="left:1315px;top:495.85px;font-size:15.6px;color:#383838;letter-spacing:0px">23 December, 2000</div>
<div style="left:1472px;top:495.85px;font-size:15.6px;color:#383838;letter-spacing:0px">100</div>
<div style="left:141px;top:517.84px;width:1px;height:22.58px;background:#f3f3f3"></div>
<div style="left:516px;top:517.84px;width:1px;height:22.58px;background:#f3f3f3"></div>
<div style="left:856px;top:517.84px;width:1px;height:22.58px;background:#f3f3f3"></div>
<div style="left:1135px;top:517.84px;width:1px;height:22.58px;background:#f3f3f3"></div>
<div style="left:1306px;top:517.84px;width:1px;height:22.58px;background:#f3f3f3"></div>
<div style="left:1463px;top:517.84px;width:1px;height:22.58px;background:#f3f3f3"></div>
<div style="left:9px;top:522.43px;font-size:15.6px;color:#383838;letter-spacing:0px">150232</div>
<div style="left:150px;top:522.43px;font-size:15.6px;color:#383838;letter-spacing:-0.3px">MOHAMMED MUSTHAFA KOOOTTAM PUNCHAYIL</div>
<div style="left:525px;top:522.43px;font-size:15.6px;color:#383838;letter-spacing:-0.95px">MESSENGER</div>
<div style="left:865px;top:522.43px;font-size:15.6px;color:#383838;letter-spacing:-1.0px">STAFF</div>
<div style="left:955px;top:522.43px;font-size:15.6px;color:#383838;letter-spacing:-0.95px">BOTC-FINANCE</div>
<div style="left:1144px;top:522.43px;font-size:15.6px;color:#383838;letter-spacing:-1.1px">ACCOUNTS</div>
<div style="left:1315px;top:522.43px;font-size:15.6px;color:#383838;letter-spacing:0px">30 January, 1997</div>
<div style="left:1472px;top:522.43px;font-size:15.6px;color:#383838;letter-spacing:0px">100</div>
<div style="left:0px;top:542.42px;width:1492px;height:26.58px;background:#eeeeee"></div>
<div style="left:141px;top:544.42px;width:1px;height:22.58px;background:#f6f6f6"></div>
<div style="left:516px;top:544.42px;width:1px;height:22.58px;background:#f6f6f6"></div>
<div style="left:856px;top:544.42px;width:1px;height:22.58px;background:#f6f6f6"></div>
<div style="left:1135px;top:544.42px;width:1px;height:22.58px;background:#f6f6f6"></div>
<div style="left:1306px;top:544.42px;width:1px;height:22.58px;background:#f6f6f6"></div>
<div style="left:1463px;top:544.42px;width:1px;height:22.58px;background:#f6f6f6"></div>
<div style="left:9px;top:549.01px;font-size:15.6px;color:#383838;letter-spacing:0px">150234</div>
<div style="left:150px;top:549.01px;font-size:15.6px;color:#383838;letter-spacing:-0.3px">PALAYYAN CHRISTUDASAN</div>
<div style="left:525px;top:549.01px;font-size:15.6px;color:#383838;letter-spacing:-0.95px">OFFICE ASSISTANT (STAFF)</div>
<div style="left:865px;top:549.01px;font-size:15.6px;color:#383838;letter-spacing:-1.0px">STAFF</div>
<div style="left:955px;top:549.01px;font-size:15.6px;color:#383838;letter-spacing:-0.95px">BOTC-ADMINISTRATION</div>
<div style="left:1144px;top:549.01px;font-size:15.6px;color:#383838;letter-spacing:-1.1px">FACILITIES &amp; CAMP</div>
<div style="left:1315px;top:549.01px;font-size:15.6px;color:#383838;letter-spacing:0px">20 August, 1997</div>
<div style="left:1472px;top:549.01px;font-size:15.6px;color:#383838;letter-spacing:0px">100</div>
<div style="left:0px;top:37px;width:1492px;height:2px;background:#3fbcbc"></div>
<div style="left:0px;top:574.6px;width:1492px;height:2.4px;background:#3fbcbc"></div>
<div style="left:141px;top:577px;width:1px;height:25px;background:#cfe9e9"></div>
<div style="left:516px;top:577px;width:1px;height:25px;background:#cfe9e9"></div>
<div style="left:856px;top:577px;width:1px;height:25px;background:#cfe9e9"></div>
<div style="left:1135px;top:577px;width:1px;height:25px;background:#cfe9e9"></div>
<div style="left:1306px;top:577px;width:1px;height:25px;background:#cfe9e9"></div>
<div style="left:1463px;top:577px;width:1px;height:25px;background:#cfe9e9"></div>
<div style="left:9px;top:581.99px;font-size:15.6px;color:#252525;font-weight:bold">Total</div>
</div>
<div style="left:74px;top:1297px;width:1494px;height:15px;background:#f0f0f0"></div>
<div style="left:118.5px;top:1297px;width:330.5px;height:15px;background:#c9c9c9"></div>
<svg style="position:absolute;left:90px;top:1298px;" width="12" height="13" viewBox="0 0 12 13"><path d="M9 1.5 L3 6.5 L9 11.5" fill="none" stroke="#333" stroke-width="1.3"/></svg>
<svg style="position:absolute;left:1540px;top:1298px;" width="12" height="13" viewBox="0 0 12 13"><path d="M3 1.5 L9 6.5 L3 11.5" fill="none" stroke="#333" stroke-width="1.3"/></svg>
<div style="left:1568px;top:695px;width:14px;height:601px;background:#f0f0f0"></div>
<div style="left:1568px;top:762px;width:15px;height:20px;background:#cdcdcd"></div>
<svg style="position:absolute;left:1569px;top:710px;" width="14" height="12" viewBox="0 0 14 12"><path d="M2 9 L7 3 L12 9" fill="none" stroke="#333" stroke-width="1.3"/></svg>
<svg style="position:absolute;left:1568px;top:1268px;" width="14" height="12" viewBox="0 0 14 12"><path d="M2 3 L7 9 L12 3" fill="none" stroke="#333" stroke-width="1.3"/></svg>
<div style="left:36px;top:1339px;width:36px;height:35px;background:#e4e4e4"></div>
<svg style="position:absolute;left:40px;top:1348px;" width="30" height="16" viewBox="0 0 30 16"><path d="M9 3 L4 8 L9 13 Z" fill="#cfcfcf"/><path d="M21 3 L26 8 L21 13 Z" fill="#cfcfcf"/></svg>
<div style="left:72px;top:1339px;width:152px;height:35px;background:#fff"></div>
<div style="left:72px;top:1372px;width:152px;height:2px;background:#f2c811"></div>
<div style="left:93.5px;top:1351.12px;font-size:12.15px;color:#333;">Costing &amp; Provisions</div>
<div style="left:213px;top:1342.69px;font-size:11px;color:#555;">x</div>
<div style="left:224px;top:1339px;width:1px;height:35px;background:#d0d0d0"></div>
<div style="left:246.3px;top:1350.95px;font-size:12.35px;color:#444;">Job Allocation Summary</div>
<div style="left:398px;top:1339px;width:1px;height:35px;background:#d0d0d0"></div>
<div style="left:420px;top:1350.95px;font-size:12.35px;color:#444;">Pivot Costing By Month</div>
<div style="left:568px;top:1339px;width:39px;height:35px;background:#f2c811"></div>
<div style="left:582px;top:1355px;width:12px;height:3px;background:#5d5a45"></div>
<div style="left:586.5px;top:1350.5px;width:3px;height:12px;background:#5d5a45"></div>
<div style="left:0px;top:1380.87px;font-size:10.2px;color:#f0f0f0;letter-spacing:-0.1px">PAGE 1 OF 3</div>
<div style="left:1545px;width:1000px;text-align:right;top:1380.77px;font-size:10.9px;color:#eee;">Storage Mode: DirectQuery (click to change)</div>
<div style="left:2192px;top:135px;width:1px;height:1239px;background:#111"></div>
<div style="left:2193px;top:135px;width:180px;height:1239px;background:#464646"></div>
<div style="left:2193px;top:135px;width:180px;height:48px;background:#222222"></div>
<div style="left:2205.4px;top:152.78px;font-size:12.9px;color:#fff;font-weight:bold">VISUALIZATIONS</div>
<svg style="position:absolute;left:2351px;top:152px;" width="11" height="14" viewBox="0 0 11 14"><path d="M2 1 L8.5 7 L2 13" fill="none" stroke="#bbb" stroke-width="1.3"/></svg>
<svg style="position:absolute;left:2202px;top:189px;" width="17" height="17" viewBox="0 0 17 17"><rect x="1" y="3" width="6" height="4" fill="#ccc"/><rect x="7" y="3" width="6" height="4" fill="#ee9b4b"/><rect x="1" y="9" width="7" height="4" fill="#ccc"/><rect x="8" y="9" width="7" height="4" fill="#ee9b4b"/><path d="M0.5 0 V15.5 H16" stroke="#777" fill="none"/></svg>
<svg style="position:absolute;left:2231px;top:189px;" width="17" height="17" viewBox="0 0 17 17"><rect x="3" y="7" width="4" height="8" fill="#ee9b4b"/><rect x="9" y="2" width="4" height="13" fill="#ee9b4b"/><rect x="3" y="12" width="4" height="3" fill="#ddd"/><rect x="9" y="11" width="4" height="4" fill="#ddd"/><path d="M0.5 0 V15.5 H16" stroke="#777" fill="none"/></svg>
<svg style="position:absolute;left:2259px;top:189px;" width="17" height="17" viewBox="0 0 17 17"><rect x="1" y="1" width="9" height="3" fill="#f0d08a"/><rect x="1" y="5" width="13" height="3" fill="#8fb3de"/><rect x="1" y="9" width="10" height="3" fill="#f0d08a"/><rect x="1" y="13" width="8" height="2" fill="#8fb3de"/></svg>
<svg style="position:absolute;left:2287px;top:189px;" width="17" height="17" viewBox="0 0 17 17"><rect x="2" y="8" width="2" height="7" fill="#f0d08a"/><rect x="5" y="2" width="2" height="13" fill="#8fb3de"/><rect x="9" y="5" width="2" height="10" fill="#f0d08a"/><rect x="12" y="9" width="2" height="6" fill="#8fb3de"/><path d="M0.5 0 V15.5 H16" stroke="#777" fill="none"/></svg>
<svg style="position:absolute;left:2314px;top:189px;" width="17" height="17" viewBox="0 0 17 17"><rect x="1" y="3" width="6" height="4" fill="#aaa"/><rect x="7" y="3" width="8" height="4" fill="#8fb3de"/><rect x="1" y="9" width="6" height="4" fill="#aaa"/><rect x="7" y="9" width="8" height="4" fill="#8fb3de"/><path d="M0.5 0 V15.5" stroke="#777"/></svg>
<svg style="position:absolute;left:2342px;top:189px;" width="17" height="17" viewBox="0 0 17 17"><rect x="2" y="1" width="5" height="14" fill="#8fb3de"/><rect x="9" y="1" width="5" height="14" fill="#8fb3de"/><rect x="2" y="9" width="5" height="6" fill="#999"/><rect x="9" y="10" width="5" height="5" fill="#999"/><path d="M0.5 0 V15.5 H16" stroke="#777" fill="none"/></svg>
<svg style="position:absolute;left:2202px;top:212px;" width="17" height="17" viewBox="0 0 17 17"><path d="M1 14 L6 7 L9 10 L14 4" stroke="#ccc" fill="none"/><path d="M0.5 0 V15.5 H16" stroke="#777" fill="none"/></svg>
<svg style="position:absolute;left:2231px;top:212px;" width="17" height="17" viewBox="0 0 17 17"><path d="M1 8 Q5 4 8 7 T15 5 V15 H1 Z" fill="#ee9b4b"/><path d="M1 10 Q5 7 8 10 T15 9" stroke="#8fb3de" stroke-width="2" fill="none"/></svg>
<svg style="position:absolute;left:2259px;top:212px;" width="17" height="17" viewBox="0 0 17 17"><path d="M1 6 L4 2 L8 6 L12 2 L15 6 V15 H1 Z" fill="#f0d08a"/><path d="M1 10 L4 7 L8 10 L12 7 L15 10 V13 H1 Z" fill="#8fb3de"/></svg>
<svg style="position:absolute;left:2287px;top:212px;" width="17" height="17" viewBox="0 0 17 17"><rect x="2" y="3" width="3" height="12" fill="#ee9b4b"/><rect x="7" y="7" width="3" height="8" fill="#ee9b4b"/><rect x="11" y="5" width="3" height="10" fill="#ccc"/><path d="M0.5 0 V15.5 H16 M15.5 0 V15.5" stroke="#e88" fill="none"/></svg>
<svg style="position:absolute;left:2314px;top:212px;" width="17" height="17" viewBox="0 0 17 17"><rect x="2" y="5" width="2" height="10" fill="#f0d08a"/><rect x="5" y="2" width="2" height="13" fill="#8fb3de"/><rect x="9" y="6" width="2" height="9" fill="#f0d08a"/><rect x="12" y="8" width="2" height="7" fill="#8fb3de"/><path d="M0.5 0 V15.5 H16" stroke="#777" fill="none"/></svg>
<svg style="position:absolute;left:2342px;top:212px;" width="17" height="17" viewBox="0 0 17 17"><rect x="1" y="3" width="3" height="12" fill="#fff"/><rect x="5" y="6" width="3" height="9" fill="#aaa"/><rect x="9" y="2" width="3" height="13" fill="#fff"/><rect x="13" y="5" width="2" height="10" fill="#ccc"/></svg>
<svg style="position:absolute;left:2202px;top:236px;" width="17" height="17" viewBox="0 0 17 17"><rect x="1" y="2" width="3" height="13" fill="#ddd"/><path d="M5 14 V3 L10 12 V3" stroke="#d86060" stroke-width="2" fill="none"/><rect x="12" y="2" width="3" height="13" fill="#9cc"/></svg>
<svg style="position:absolute;left:2231px;top:236px;" width="17" height="17" viewBox="0 0 17 17"><circle cx="4" cy="10" r="1.5" fill="#ee9b4b"/><circle cx="8" cy="6" r="1.5" fill="#f0d08a"/><circle cx="11" cy="10" r="1.5" fill="#8fb3de"/><circle cx="13" cy="4" r="1.5" fill="#999"/><path d="M0.5 0 V15.5 H16" stroke="#777" fill="none"/></svg>
<svg style="position:absolute;left:2259px;top:236px;" width="17" height="17" viewBox="0 0 17 17"><circle cx="8" cy="8" r="7" fill="#8fb3de"/><path d="M8 8 V1 A7 7 0 0 0 1.5 10 Z" fill="#f3dcc0"/></svg>
<svg style="position:absolute;left:2287px;top:236px;" width="17" height="17" viewBox="0 0 17 17"><circle cx="8" cy="8" r="6" fill="none" stroke="#5d8cc8" stroke-width="3.5"/><path d="M8 2 A6 6 0 0 1 14 8" stroke="#f0d08a" stroke-width="3.5" fill="none"/></svg>
<svg style="position:absolute;left:2314px;top:236px;" width="17" height="17" viewBox="0 0 17 17"><rect x="1" y="1" width="14" height="14" fill="#fff"/><path d="M1 5 H15 M1 10 H15 M6 1 V15 M10 1 V10" stroke="#888"/></svg>
<svg style="position:absolute;left:2342px;top:236px;" width="17" height="17" viewBox="0 0 17 17"><circle cx="8" cy="8" r="7" fill="#d8eef5"/><path d="M1 8 H15 M8 1 V15 M3 4 H13 M3 12 H13" stroke="#777"/></svg>
<svg style="position:absolute;left:2202px;top:260px;" width="17" height="17" viewBox="0 0 17 17"><path d="M1 3 L12 2 L15 6 L13 14 L3 13 Z" fill="#8fb3de"/><path d="M1 8 L8 6 L10 13" stroke="#ddd" fill="none"/></svg>
<svg style="position:absolute;left:2231px;top:260px;" width="17" height="17" viewBox="0 0 17 17"><rect x="1" y="2" width="14" height="3" fill="#8fb3de"/><rect x="3" y="6" width="10" height="3" fill="#f0d08a"/><rect x="5" y="10" width="6" height="3" fill="#8fb3de"/></svg>
<svg style="position:absolute;left:2259px;top:260px;" width="17" height="17" viewBox="0 0 17 17"><path d="M2 14 A6 6 0 0 1 14 14" stroke="#f0d08a" stroke-width="3" fill="none"/><path d="M11 9 A6 6 0 0 1 14 14" stroke="#6a9" stroke-width="3" fill="none"/></svg>
<svg style="position:absolute;left:2287px;top:260px;" width="17" height="17" viewBox="0 0 17 17"><rect x="0" y="2" width="16" height="12" fill="#f4f4f4"/><text x="8" y="10" font-size="7" text-anchor="middle" fill="#666" font-family="Liberation Sans">123</text></svg>
<svg style="position:absolute;left:2314px;top:260px;" width="17" height="17" viewBox="0 0 17 17"><rect x="1" y="1" width="14" height="15" fill="#f4f4f4"/><path d="M3 3 V14 M6 5 H12 M6 9 H12" stroke="#999"/></svg>
<svg style="position:absolute;left:2342px;top:260px;" width="17" height="17" viewBox="0 0 17 17"><rect x="0" y="3" width="16" height="11" fill="#f4f4f4"/><path d="M3 9 L5 6 L7 9 Z" fill="#4a8"/><path d="M10 6 L12 9 L14 6 Z" fill="#d55"/></svg>
<svg style="position:absolute;left:2202px;top:284px;" width="17" height="17" viewBox="0 0 17 17"><rect x="0" y="0" width="17" height="17" fill="#555" stroke="#f2c811" stroke-width="2.2"/><rect x="3" y="3" width="11" height="5" fill="#999"/><path d="M8 9 H14 L11 14 Z" fill="#222"/></svg>
<svg style="position:absolute;left:2231px;top:284px;" width="17" height="17" viewBox="0 0 17 17"><rect x="1" y="1" width="15" height="15" fill="#fff"/><rect x="1" y="1" width="15" height="3" fill="#5b7fb3"/><path d="M1 8 H16 M1 12 H16 M6 4 V16 M11 4 V16" stroke="#888"/></svg>
<svg style="position:absolute;left:2259px;top:284px;" width="17" height="17" viewBox="0 0 17 17"><rect x="1" y="1" width="15" height="15" fill="#dde"/><rect x="1" y="1" width="15" height="3" fill="#5b7fb3"/><path d="M1 8 H16 M1 12 H16 M6 4 V16 M11 4 V16" stroke="#888"/></svg>
<svg style="position:absolute;left:2287px;top:284px;" width="17" height="17" viewBox="0 0 17 17"><text x="8" y="15" font-size="17" font-weight="bold" text-anchor="middle" fill="#8fb3de" font-family="Liberation Sans">R</text></svg>
<svg style="position:absolute;left:2314px;top:284px;" width="17" height="17" viewBox="0 0 17 17"><text x="8" y="13" font-size="13" font-weight="bold" text-anchor="middle" fill="#f2d64b" font-family="Liberation Sans">Py</text></svg>
<svg style="position:absolute;left:2342px;top:284px;" width="17" height="17" viewBox="0 0 17 17"><circle cx="8" cy="8" r="7.5" fill="#2f6db5"/><path d="M1 8 H15 M8 1 V15 M2 4 H14 M2 12 H14" stroke="#4db36b" stroke-width="1.2"/></svg>
<svg style="position:absolute;left:2202px;top:309px;" width="18" height="15" viewBox="0 0 18 15"><rect x="0" y="0" width="18" height="15" fill="#f4f4f4"/><text x="9" y="10" font-size="8" text-anchor="middle" fill="#666" font-family="Liberation Sans">123</text></svg>
<div style="left:2233px;top:315px;width:3px;height:3px;background:#fff"></div>
<div style="left:2239px;top:315px;width:3px;height:3px;background:#fff"></div>
<div style="left:2245px;top:315px;width:3px;height:3px;background:#fff"></div>
<div style="left:2193px;top:331px;width:180px;height:36px;background:#222222"></div>
<div style="left:2205px;top:365px;width:40px;height:2px;background:#f2c811"></div>
<svg style="position:absolute;left:2213px;top:337px;" width="24" height="22" viewBox="0 0 24 22"><rect x="2" y="4" width="19" height="16" fill="none" stroke="#fff" stroke-dasharray="2 1.5"/><path d="M2 9.5 H21 M2 14.5 H21" stroke="#fff" stroke-dasharray="2 1.5"/><path d="M4 1 H18" stroke="#fff"/></svg>
<svg style="position:absolute;left:2255px;top:337px;" width="20" height="22" viewBox="0 0 20 22"><rect x="1" y="1" width="17" height="6" rx="1" fill="none" stroke="#fff" stroke-width="1.3"/><path d="M18 4 V10 H9.5 V13" fill="none" stroke="#fff" stroke-width="1.3"/><rect x="7.5" y="13" width="4" height="8" fill="none" stroke="#fff" stroke-width="1.3"/></svg>
<svg style="position:absolute;left:2293px;top:337px;" width="24" height="22" viewBox="0 0 24 22"><circle cx="10" cy="9.5" r="8.5" fill="none" stroke="#fff" stroke-width="1.3"/><path d="M3 12 L7 8 L11 11 L17 6" fill="none" stroke="#fff" stroke-width="1.3"/><path d="M5 12 V17 M8 11 V18 M11 13 V18 M14 12 V17" stroke="#fff"/><path d="M16 16 L22 21" stroke="#fff" stroke-width="1.3"/></svg>
<div style="left:2205px;top:375.98px;font-size:11.6px;color:#eee;">Field</div>
<div style="left:2198px;top:395px;width:169px;height:30px;border:1px dashed #5a5a5a;box-sizing:border-box"></div>
<div style="left:2200px;top:399.5px;width:164px;height:22px;background:#2c2c2c;border-radius:3px"></div>
<div style="left:2205px;top:404.24px;font-size:12px;color:#fff;">Project</div>
<svg style="position:absolute;left:2333px;top:405px;" width="10" height="8" viewBox="0 0 10 8"><path d="M1 1 H9 L5 6 Z" fill="#777"/></svg>
<svg style="position:absolute;left:2349px;top:404px;" width="12" height="12" viewBox="0 0 12 12"><path d="M1 1 L11 11 M11 1 L1 11" stroke="#fff" stroke-width="1.3"/></svg>
<div style="left:2193px;top:429px;width:180px;height:36px;background:#222222"></div>
<div style="left:2207px;top:443.16px;font-size:13.4px;color:#fff;font-weight:bold">FILTERS</div>
<div style="left:2209.3px;top:476.71px;font-size:11.8px;color:#e6e6e6;">Visual level filters</div>
<div style="left:2198px;top:496.5px;width:169px;height:25px;border:1px dashed #5c5c5c;box-sizing:border-box"></div>
<div style="left:2206.3px;top:504.43px;font-size:11.9px;color:#a9a9a9;">Add data fields here</div>
<div style="left:2198px;top:550.5px;width:169px;height:25px;border:1px dashed #5c5c5c;box-sizing:border-box"></div>
<div style="left:2206.3px;top:558.43px;font-size:11.9px;color:#a9a9a9;">Add data fields here</div>
<div style="left:2198px;top:604.5px;width:169px;height:25px;border:1px dashed #5c5c5c;box-sizing:border-box"></div>
<div style="left:2206.3px;top:612.43px;font-size:11.9px;color:#a9a9a9;">Add data fields here</div>
<div style="left:2209.5px;top:531.01px;font-size:11.8px;color:#e6e6e6;">Page level filters</div>
<div style="left:2209.5px;top:585.41px;font-size:11.8px;color:#e6e6e6;">Report level filters</div>
<div style="left:2193px;top:634px;width:180px;height:36px;background:#222222"></div>
<div style="left:2207.2px;top:649.38px;font-size:12.9px;color:#fff;font-weight:bold">DRILLTHROUGH</div>
<div style="left:2202.3px;top:680.84px;font-size:12px;color:#e6e6e6;">Cross-report</div>
<div style="left:2205.8px;top:704.97px;font-size:12.2px;color:#e6e6e6;">Off</div>
<svg style="position:absolute;left:2226px;top:704px;" width="32" height="14" viewBox="0 0 32 14"><circle cx="7" cy="7" r="5" fill="none" stroke="#fff" stroke-width="1.5"/><path d="M12 7 H30" stroke="#fff" stroke-width="1.5"/></svg>
<div style="left:2202.3px;top:734.54px;font-size:12px;color:#e6e6e6;">Keep all filters</div>
<div style="left:2205.8px;top:758.67px;font-size:12.2px;color:#e6e6e6;">On</div>
<svg style="position:absolute;left:2224px;top:757px;" width="34" height="15" viewBox="0 0 34 15"><path d="M2 7.5 H22" stroke="#fff" stroke-width="1.5"/><circle cx="25.5" cy="7.5" r="6.2" fill="#fff"/></svg>
<div style="left:2198px;top:782px;width:169px;height:25px;border:1px dashed #5c5c5c;box-sizing:border-box"></div>
<div style="left:2206.3px;top:788.67px;font-size:12.2px;color:#a9a9a9;">Add drillthrough fields here</div>
<div style="left:2373px;top:135px;width:2px;height:1239px;background:#151515"></div>
<div style="left:2375px;top:135px;width:173px;height:1239px;background:#464646"></div>
<div style="left:2375px;top:135px;width:173px;height:47px;background:#222222"></div>
<div style="left:2386px;top:152.63px;font-size:13.2px;color:#fff;font-weight:bold">FIELDS</div>
<svg style="position:absolute;left:2533px;top:152px;" width="11" height="14" viewBox="0 0 11 14"><path d="M2 1 L8.5 7 L2 13" fill="none" stroke="#bbb" stroke-width="1.3"/></svg>
<div style="left:2378px;top:187px;width:170px;height:30px;background:#232323;border:1px solid #111;box-sizing:border-box"></div>
<svg style="position:absolute;left:2389px;top:193px;" width="18" height="17" viewBox="0 0 18 17"><circle cx="11" cy="6.5" r="5" fill="none" stroke="#bbb" stroke-width="1.2"/><path d="M7.5 10 L1.5 16" stroke="#bbb" stroke-width="1.2"/></svg>
<div style="left:2414.5px;top:196.63px;font-size:11.9px;color:#bdbdbd;">Search</div>
<div style="left:2375px;top:221px;width:173px;height:1px;background:#3a3a3a"></div>
<svg style="position:absolute;left:2380px;top:241px;" width="8" height="8" viewBox="0 0 8 8"><path d="M7 1 V7 H1 Z" fill="#888"/></svg>
<svg style="position:absolute;left:2396px;top:239px;" width="15" height="12" viewBox="0 0 15 12"><rect x="0" y="0" width="14" height="12" fill="#eee"/><path d="M0 4 H14 M0 8 H14 M5 0 V12 M9.5 0 V12" stroke="#464646" stroke-width="1.2"/></svg>
<div style="left:2422.2px;top:236.13px;font-size:13.2px;color:#f2c811;letter-spacing:-0.5px">perc_report</div>
<div style="left:2375px;top:222px;width:173px;height:1152px;overflow:hidden">
<div style="left:4px;top:40px;width:175px;height:20px;background:#5f5f5f;border-radius:3px;box-shadow:0 1.5px 0 #363636"></div>
<div style="left:33px;top:46px;width:10px;height:10px;background:#fff"></div>
<div style="left:49.5px;top:43.5px;font-size:14px;color:#8e8e8e;line-height:1;transform:scaleX(1.15)">&#931;</div>
<div style="left:65px;top:45.63px;font-size:12.6px;color:#f0f0f0;letter-spacing:-0.45px">accom</div>
<div style="left:4px;top:62px;width:175px;height:20px;background:#5f5f5f;border-radius:3px;box-shadow:0 1.5px 0 #363636"></div>
<div style="left:33px;top:68px;width:10px;height:10px;background:#fff"></div>
<div style="left:49.5px;top:65.5px;font-size:14px;color:#8e8e8e;line-height:1;transform:scaleX(1.15)">&#931;</div>
<div style="left:65px;top:67.63px;font-size:12.6px;color:#f0f0f0;letter-spacing:-0.45px">adj</div>
<div style="left:4px;top:84px;width:175px;height:20px;background:#5f5f5f;border-radius:3px;box-shadow:0 1.5px 0 #363636"></div>
<div style="left:33px;top:90px;width:10px;height:10px;background:#fff"></div>
<div style="left:65px;top:89.63px;font-size:12.6px;color:#f0f0f0;letter-spacing:-0.45px">adj_desc</div>
<div style="left:4px;top:106px;width:175px;height:20px;background:#5f5f5f;border-radius:3px;box-shadow:0 1.5px 0 #363636"></div>
<div style="left:33px;top:112px;width:10px;height:10px;background:#fff"></div>
<div style="left:65px;top:111.63px;font-size:12.6px;color:#f0f0f0;letter-spacing:-0.45px">Bank_Name</div>
<div style="left:4px;top:128px;width:175px;height:20px;background:#5f5f5f;border-radius:3px;box-shadow:0 1.5px 0 #363636"></div>
<div style="left:33px;top:134px;width:10px;height:10px;background:#fff"></div>
<div style="left:49.5px;top:131.5px;font-size:14px;color:#8e8e8e;line-height:1;transform:scaleX(1.15)">&#931;</div>
<div style="left:65px;top:133.63px;font-size:12.6px;color:#f0f0f0;letter-spacing:-0.45px">basic</div>
<div style="left:4px;top:150px;width:175px;height:20px;background:#5f5f5f;border-radius:3px;box-shadow:0 1.5px 0 #363636"></div>
<div style="left:33px;top:156px;width:10px;height:10px;background:#fff"></div>
<div style="left:49.5px;top:153.5px;font-size:14px;color:#8e8e8e;line-height:1;transform:scaleX(1.15)">&#931;</div>
<div style="left:65px;top:155.63px;font-size:12.6px;color:#f0f0f0;letter-spacing:-0.45px">Cmp_ID_N</div>
<div style="left:4px;top:172px;width:175px;height:20px;background:#5f5f5f;border-radius:3px;box-shadow:0 1.5px 0 #363636"></div>
<div style="left:33px;top:178px;width:10px;height:10px;background:#fff"></div>
<div style="left:65px;top:177.63px;font-size:12.6px;color:#f0f0f0;letter-spacing:-0.45px">Cmp_Name_V</div>
<div style="left:4px;top:194px;width:175px;height:20px;background:#5f5f5f;border-radius:3px;box-shadow:0 1.5px 0 #363636"></div>
<div style="left:33px;top:200px;width:10px;height:10px;background:#fff"></div>
<div style="left:65px;top:199.63px;font-size:12.6px;color:#f0f0f0;letter-spacing:-0.45px">Cnt_Name_V</div>
<div style="left:4px;top:216px;width:175px;height:20px;background:#5f5f5f;border-radius:3px;box-shadow:0 1.5px 0 #363636"></div>
<div style="left:33px;top:222px;width:10px;height:10px;background:#fff"></div>
<div style="left:49.5px;top:219.5px;font-size:14px;color:#8e8e8e;line-height:1;transform:scaleX(1.15)">&#931;</div>
<div style="left:65px;top:221.63px;font-size:12.6px;color:#f0f0f0;letter-spacing:-0.45px">commuting</div>
<div style="left:4px;top:238px;width:175px;height:20px;background:#5f5f5f;border-radius:3px;box-shadow:0 1.5px 0 #363636"></div>
<div style="left:33px;top:244px;width:10px;height:10px;background:#fff"></div>
<div style="left:65px;top:243.63px;font-size:12.6px;color:#f0f0f0;letter-spacing:-0.45px">date</div>
<div style="left:4px;top:260px;width:175px;height:20px;background:#5f5f5f;border-radius:3px;box-shadow:0 1.5px 0 #363636"></div>
<div style="left:33px;top:266px;width:10px;height:10px;background:#fff"></div>
<div style="left:49.5px;top:263.5px;font-size:14px;color:#8e8e8e;line-height:1;transform:scaleX(1.15)">&#931;</div>
<div style="left:65px;top:265.63px;font-size:12.6px;color:#f0f0f0;letter-spacing:-0.45px">ded</div>
<div style="left:4px;top:282px;width:175px;height:20px;background:#5f5f5f;border-radius:3px;box-shadow:0 1.5px 0 #363636"></div>
<div style="left:33px;top:288px;width:10px;height:10px;background:#fff"></div>
<div style="left:65px;top:287.63px;font-size:12.6px;color:#f0f0f0;letter-spacing:-0.45px">ded_desc</div>
<div style="left:4px;top:304px;width:175px;height:20px;background:#5f5f5f;border-radius:3px;box-shadow:0 1.5px 0 #363636"></div>
<div style="left:33px;top:310px;width:10px;height:10px;background:#fff"></div>
<div style="left:65px;top:309.63px;font-size:12.6px;color:#f0f0f0;letter-spacing:-0.45px">department</div>
<div style="left:4px;top:326px;width:175px;height:20px;background:#5f5f5f;border-radius:3px;box-shadow:0 1.5px 0 #363636"></div>
<div style="left:33px;top:332px;width:10px;height:10px;background:#fff"></div>
<div style="left:65px;top:331.63px;font-size:12.6px;color:#f0f0f0;letter-spacing:-0.45px">display_name</div>
<div style="left:4px;top:348px;width:175px;height:20px;background:#5f5f5f;border-radius:3px;box-shadow:0 1.5px 0 #363636"></div>
<div style="left:33px;top:354px;width:10px;height:10px;background:#fff"></div>
<div style="left:65px;top:353.63px;font-size:12.6px;color:#f0f0f0;letter-spacing:-0.45px">Dsm_Band_N</div>
<div style="left:4px;top:370px;width:175px;height:20px;background:#5f5f5f;border-radius:3px;box-shadow:0 1.5px 0 #363636"></div>
<div style="left:33px;top:376px;width:10px;height:10px;background:#fff"></div>
<div style="left:65px;top:375.63px;font-size:12.6px;color:#f0f0f0;letter-spacing:-0.45px">Emp_BankAcc...</div>
<div style="left:4px;top:392px;width:175px;height:20px;background:#5f5f5f;border-radius:3px;box-shadow:0 1.5px 0 #363636"></div>
<div style="left:33px;top:398px;width:10px;height:10px;background:#fff"></div>
<div style="left:65px;top:397.63px;font-size:12.6px;color:#f0f0f0;letter-spacing:-0.45px">Emp_DOB_D</div>
<div style="left:4px;top:414px;width:175px;height:20px;background:#5f5f5f;border-radius:3px;box-shadow:0 1.5px 0 #363636"></div>
<div style="left:33px;top:420px;width:10px;height:10px;background:#fff"></div>
<div style="left:65px;top:419.63px;font-size:12.6px;color:#f0f0f0;letter-spacing:-0.45px">Emp_DOJ_D</div>
<div style="left:4px;top:436px;width:175px;height:20px;background:#5f5f5f;border-radius:3px;box-shadow:0 1.5px 0 #363636"></div>
<div style="left:33px;top:442px;width:10px;height:10px;background:#fff"></div>
<div style="left:65px;top:441.63px;font-size:12.6px;color:#f0f0f0;letter-spacing:-0.45px">Emp_FamilySt...</div>
<div style="left:4px;top:458px;width:175px;height:20px;background:#5f5f5f;border-radius:3px;box-shadow:0 1.5px 0 #363636"></div>
<div style="left:33px;top:464px;width:10px;height:10px;background:#fff"></div>
<div style="left:65px;top:463.63px;font-size:12.6px;color:#f0f0f0;letter-spacing:-0.45px">Emp_FileNo_V</div>
<div style="left:4px;top:480px;width:175px;height:20px;background:#5f5f5f;border-radius:3px;box-shadow:0 1.5px 0 #363636"></div>
<div style="left:33px;top:486px;width:10px;height:10px;background:#fff"></div>
<div style="left:65px;top:485.63px;font-size:12.6px;color:#f0f0f0;letter-spacing:-0.45px">Emp_IBANNo_V</div>
<div style="left:4px;top:502px;width:175px;height:20px;background:#5f5f5f;border-radius:3px;box-shadow:0 1.5px 0 #363636"></div>
<div style="left:33px;top:508px;width:10px;height:10px;background:#fff"></div>
<div style="left:49.5px;top:505.5px;font-size:14px;color:#8e8e8e;line-height:1;transform:scaleX(1.15)">&#931;</div>
<div style="left:65px;top:507.63px;font-size:12.6px;color:#f0f0f0;letter-spacing:-0.45px">Emp_ID_N</div>
<div style="left:4px;top:524px;width:175px;height:20px;background:#5f5f5f;border-radius:3px;box-shadow:0 1.5px 0 #363636"></div>
<div style="left:33px;top:530px;width:10px;height:10px;background:#fff"></div>
<div style="left:65px;top:529.63px;font-size:12.6px;color:#f0f0f0;letter-spacing:-0.45px">Emp_Mobile_V</div>
<div style="left:4px;top:546px;width:175px;height:20px;background:#5f5f5f;border-radius:3px;box-shadow:0 1.5px 0 #363636"></div>
<div style="left:33px;top:552px;width:10px;height:10px;background:#fff"></div>
<div style="left:49.5px;top:549.5px;font-size:14px;color:#8e8e8e;line-height:1;transform:scaleX(1.15)">&#931;</div>
<div style="left:65px;top:551.63px;font-size:12.6px;color:#f0f0f0;letter-spacing:-0.45px">Emp_NumOFT...</div>
<div style="left:4px;top:568px;width:175px;height:20px;background:#5f5f5f;border-radius:3px;box-shadow:0 1.5px 0 #363636"></div>
<div style="left:33px;top:574px;width:10px;height:10px;background:#fff"></div>
<div style="left:65px;top:573.63px;font-size:12.6px;color:#f0f0f0;letter-spacing:-0.45px">Emp_Passport...</div>
<div style="left:4px;top:590px;width:175px;height:20px;background:#5f5f5f;border-radius:3px;box-shadow:0 1.5px 0 #363636"></div>
<div style="left:33px;top:596px;width:10px;height:10px;background:#fff"></div>
<div style="left:65px;top:595.63px;font-size:12.6px;color:#f0f0f0;letter-spacing:-0.45px">Emp_Passport...</div>
<div style="left:4px;top:612px;width:175px;height:20px;background:#5f5f5f;border-radius:3px;box-shadow:0 1.5px 0 #363636"></div>
<div style="left:33px;top:618px;width:10px;height:10px;background:#fff"></div>
<div style="left:65px;top:617.63px;font-size:12.6px;color:#f0f0f0;letter-spacing:-0.45px">Emp_RPExpiry...</div>
<div style="left:4px;top:634px;width:175px;height:20px;background:#5f5f5f;border-radius:3px;box-shadow:0 1.5px 0 #363636"></div>
<div style="left:33px;top:640px;width:10px;height:10px;background:#fff"></div>
<div style="left:65px;top:639.63px;font-size:12.6px;color:#f0f0f0;letter-spacing:-0.45px">Emp_RPNumb...</div>
<div style="left:4px;top:656px;width:175px;height:20px;background:#5f5f5f;border-radius:3px;box-shadow:0 1.5px 0 #363636"></div>
<div style="left:33px;top:662px;width:10px;height:10px;background:#fff"></div>
<div style="left:65px;top:661.63px;font-size:12.6px;color:#f0f0f0;letter-spacing:-0.45px">emp_status</div>
<div style="left:4px;top:678px;width:175px;height:20px;background:#5f5f5f;border-radius:3px;box-shadow:0 1.5px 0 #363636"></div>
<div style="left:33px;top:684px;width:10px;height:10px;background:#fff"></div>
<div style="left:65px;top:683.63px;font-size:12.6px;color:#f0f0f0;letter-spacing:-0.45px">Emp_TermDat...</div>
<div style="left:4px;top:700px;width:175px;height:20px;background:#5f5f5f;border-radius:3px;box-shadow:0 1.5px 0 #363636"></div>
<div style="left:33px;top:706px;width:10px;height:10px;background:#fff"></div>
<div style="left:65px;top:705.63px;font-size:12.6px;color:#f0f0f0;letter-spacing:-0.45px">emp_title</div>
<div style="left:4px;top:722px;width:175px;height:20px;background:#5f5f5f;border-radius:3px;box-shadow:0 1.5px 0 #363636"></div>
<div style="left:33px;top:728px;width:10px;height:10px;background:#fff"></div>
<div style="left:65px;top:727.63px;font-size:12.6px;color:#f0f0f0;letter-spacing:-0.45px">employee_code</div>
<div style="left:4px;top:744px;width:175px;height:20px;background:#5f5f5f;border-radius:3px;box-shadow:0 1.5px 0 #363636"></div>
<div style="left:33px;top:750px;width:10px;height:10px;background:#fff"></div>
<div style="left:49.5px;top:747.5px;font-size:14px;color:#8e8e8e;line-height:1;transform:scaleX(1.15)">&#931;</div>
<div style="left:65px;top:749.63px;font-size:12.6px;color:#f0f0f0;letter-spacing:-0.45px">eos_eligibility</div>
<div style="left:4px;top:766px;width:175px;height:20px;background:#5f5f5f;border-radius:3px;box-shadow:0 1.5px 0 #363636"></div>
<div style="left:33px;top:772px;width:10px;height:10px;background:#fff"></div>
<div style="left:49.5px;top:769.5px;font-size:14px;color:#8e8e8e;line-height:1;transform:scaleX(1.15)">&#931;</div>
<div style="left:65px;top:771.63px;font-size:12.6px;color:#f0f0f0;letter-spacing:-0.45px">finalpay_emp_...</div>
<div style="left:4px;top:788px;width:175px;height:20px;background:#5f5f5f;border-radius:3px;box-shadow:0 1.5px 0 #363636"></div>
<div style="left:33px;top:794px;width:10px;height:10px;background:#fff"></div>
<div style="left:49.5px;top:791.5px;font-size:14px;color:#8e8e8e;line-height:1;transform:scaleX(1.15)">&#931;</div>
<div style="left:65px;top:793.63px;font-size:12.6px;color:#f0f0f0;letter-spacing:-0.45px">food</div>
<div style="left:4px;top:810px;width:175px;height:20px;background:#5f5f5f;border-radius:3px;box-shadow:0 1.5px 0 #363636"></div>
<div style="left:33px;top:816px;width:10px;height:10px;background:#fff"></div>
<div style="left:49.5px;top:813.5px;font-size:14px;color:#8e8e8e;line-height:1;transform:scaleX(1.15)">&#931;</div>
<div style="left:65px;top:815.63px;font-size:12.6px;color:#f0f0f0;letter-spacing:-0.45px">fuel</div>
<div style="left:4px;top:832px;width:175px;height:20px;background:#5f5f5f;border-radius:3px;box-shadow:0 1.5px 0 #363636"></div>
<div style="left:33px;top:838px;width:10px;height:10px;background:#fff"></div>
<div style="left:49.5px;top:835.5px;font-size:14px;color:#8e8e8e;line-height:1;transform:scaleX(1.15)">&#931;</div>
<div style="left:65px;top:837.63px;font-size:12.6px;color:#f0f0f0;letter-spacing:-0.45px">fuel_days</div>
<div style="left:4px;top:854px;width:175px;height:20px;background:#5f5f5f;border-radius:3px;box-shadow:0 1.5px 0 #363636"></div>
<div style="left:33px;top:860px;width:10px;height:10px;background:#fff"></div>
<div style="left:49.5px;top:857.5px;font-size:14px;color:#8e8e8e;line-height:1;transform:scaleX(1.15)">&#931;</div>
<div style="left:65px;top:859.63px;font-size:12.6px;color:#f0f0f0;letter-spacing:-0.45px">full_accom</div>
<div style="left:4px;top:876px;width:175px;height:20px;background:#5f5f5f;border-radius:3px;box-shadow:0 1.5px 0 #363636"></div>
<div style="left:33px;top:882px;width:10px;height:10px;background:#fff"></div>
<div style="left:49.5px;top:879.5px;font-size:14px;color:#8e8e8e;line-height:1;transform:scaleX(1.15)">&#931;</div>
<div style="left:65px;top:881.63px;font-size:12.6px;color:#f0f0f0;letter-spacing:-0.45px">full_basic</div>
<div style="left:4px;top:898px;width:175px;height:20px;background:#5f5f5f;border-radius:3px;box-shadow:0 1.5px 0 #363636"></div>
<div style="left:33px;top:904px;width:10px;height:10px;background:#fff"></div>
<div style="left:49.5px;top:901.5px;font-size:14px;color:#8e8e8e;line-height:1;transform:scaleX(1.15)">&#931;</div>
<div style="left:65px;top:903.63px;font-size:12.6px;color:#f0f0f0;letter-spacing:-0.45px">full_commuting</div>
<div style="left:4px;top:920px;width:175px;height:20px;background:#5f5f5f;border-radius:3px;box-shadow:0 1.5px 0 #363636"></div>
<div style="left:33px;top:926px;width:10px;height:10px;background:#fff"></div>
<div style="left:49.5px;top:923.5px;font-size:14px;color:#8e8e8e;line-height:1;transform:scaleX(1.15)">&#931;</div>
<div style="left:65px;top:925.63px;font-size:12.6px;color:#f0f0f0;letter-spacing:-0.45px">full_food</div>
<div style="left:4px;top:942px;width:175px;height:20px;background:#5f5f5f;border-radius:3px;box-shadow:0 1.5px 0 #363636"></div>
<div style="left:33px;top:948px;width:10px;height:10px;background:#fff"></div>
<div style="left:49.5px;top:945.5px;font-size:14px;color:#8e8e8e;line-height:1;transform:scaleX(1.15)">&#931;</div>
<div style="left:65px;top:947.63px;font-size:12.6px;color:#f0f0f0;letter-spacing:-0.45px">full_fuel</div>
<div style="left:4px;top:964px;width:175px;height:20px;background:#5f5f5f;border-radius:3px;box-shadow:0 1.5px 0 #363636"></div>
<div style="left:33px;top:970px;width:10px;height:10px;background:#fff"></div>
<div style="left:49.5px;top:967.5px;font-size:14px;color:#8e8e8e;line-height:1;transform:scaleX(1.15)">&#931;</div>
<div style="left:65px;top:969.63px;font-size:12.6px;color:#f0f0f0;letter-spacing:-0.45px">full_leave_eligi...</div>
<div style="left:4px;top:986px;width:175px;height:20px;background:#5f5f5f;border-radius:3px;box-shadow:0 1.5px 0 #363636"></div>
<div style="left:33px;top:992px;width:10px;height:10px;background:#fff"></div>
<div style="left:49.5px;top:989.5px;font-size:14px;color:#8e8e8e;line-height:1;transform:scaleX(1.15)">&#931;</div>
<div style="left:65px;top:991.63px;font-size:12.6px;color:#f0f0f0;letter-spacing:-0.45px">full_mobil</div>
<div style="left:4px;top:1008px;width:175px;height:20px;background:#5f5f5f;border-radius:3px;box-shadow:0 1.5px 0 #363636"></div>
<div style="left:33px;top:1014px;width:10px;height:10px;background:#fff"></div>
<div style="left:49.5px;top:1011.5px;font-size:14px;color:#8e8e8e;line-height:1;transform:scaleX(1.15)">&#931;</div>
<div style="left:65px;top:1013.63px;font-size:12.6px;color:#f0f0f0;letter-spacing:-0.45px">full_monthly_l...</div>
<div style="left:4px;top:1030px;width:175px;height:20px;background:#5f5f5f;border-radius:3px;box-shadow:0 1.5px 0 #363636"></div>
<div style="left:33px;top:1036px;width:10px;height:10px;background:#fff"></div>
<div style="left:49.5px;top:1033.5px;font-size:14px;color:#8e8e8e;line-height:1;transform:scaleX(1.15)">&#931;</div>
<div style="left:65px;top:1035.63px;font-size:12.6px;color:#f0f0f0;letter-spacing:-0.45px">full_others</div>
<div style="left:4px;top:1052px;width:175px;height:20px;background:#5f5f5f;border-radius:3px;box-shadow:0 1.5px 0 #363636"></div>
<div style="left:33px;top:1058px;width:10px;height:10px;background:#fff"></div>
<div style="left:49.5px;top:1055.5px;font-size:14px;color:#8e8e8e;line-height:1;transform:scaleX(1.15)">&#931;</div>
<div style="left:65px;top:1057.63px;font-size:12.6px;color:#f0f0f0;letter-spacing:-0.45px">full_safetyshoe</div>
<div style="left:4px;top:1074px;width:175px;height:20px;background:#5f5f5f;border-radius:3px;box-shadow:0 1.5px 0 #363636"></div>
<div style="left:33px;top:1080px;width:10px;height:10px;background:#fff"></div>
<div style="left:49.5px;top:1077.5px;font-size:14px;color:#8e8e8e;line-height:1;transform:scaleX(1.15)">&#931;</div>
<div style="left:65px;top:1079.63px;font-size:12.6px;color:#f0f0f0;letter-spacing:-0.45px">full_skill</div>
<div style="left:4px;top:1096px;width:175px;height:20px;background:#5f5f5f;border-radius:3px;box-shadow:0 1.5px 0 #363636"></div>
<div style="left:33px;top:1102px;width:10px;height:10px;background:#fff"></div>
<div style="left:49.5px;top:1099.5px;font-size:14px;color:#8e8e8e;line-height:1;transform:scaleX(1.15)">&#931;</div>
<div style="left:65px;top:1101.63px;font-size:12.6px;color:#f0f0f0;letter-spacing:-0.45px">full_ticket</div>
<div style="left:4px;top:1118px;width:175px;height:20px;background:#5f5f5f;border-radius:3px;box-shadow:0 1.5px 0 #363636"></div>
<div style="left:33px;top:1124px;width:10px;height:10px;background:#fff"></div>
<div style="left:49.5px;top:1121.5px;font-size:14px;color:#8e8e8e;line-height:1;transform:scaleX(1.15)">&#931;</div>
<div style="left:65px;top:1123.63px;font-size:12.6px;color:#f0f0f0;letter-spacing:-0.45px">full_total</div>
<div style="left:4px;top:1140px;width:175px;height:20px;background:#5f5f5f;border-radius:3px;box-shadow:0 1.5px 0 #363636"></div>
<div style="left:33px;top:1146px;width:10px;height:10px;background:#fff"></div>
<div style="left:49.5px;top:1143.5px;font-size:14px;color:#8e8e8e;line-height:1;transform:scaleX(1.15)">&#931;</div>
<div style="left:65px;top:1145.63px;font-size:12.6px;color:#f0f0f0;letter-spacing:-0.45px">full_trans</div>
</div>
</body></html>
